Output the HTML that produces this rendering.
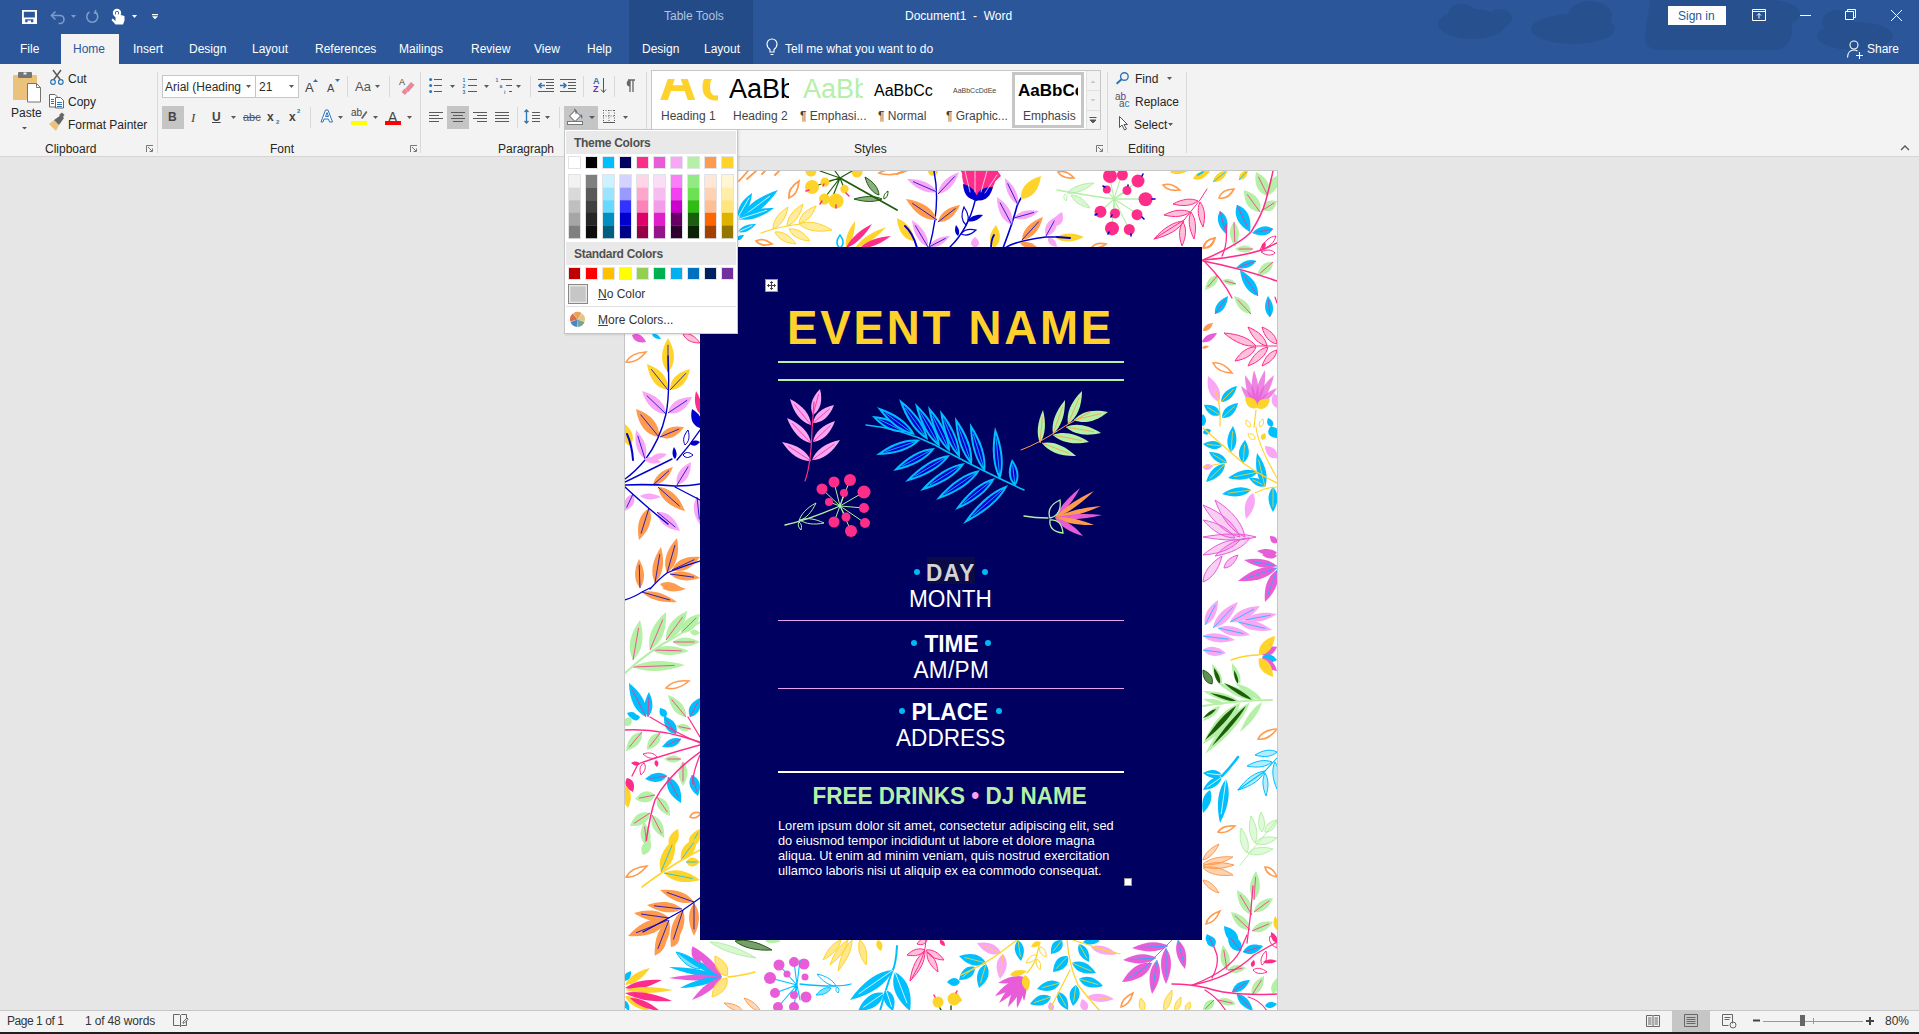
<!DOCTYPE html>
<html><head><meta charset="utf-8">
<style>
*{margin:0;padding:0;box-sizing:border-box}
html,body{width:1919px;height:1034px;overflow:hidden;background:#e6e6e6;font-family:"Liberation Sans",sans-serif}
.a{position:absolute}
.t{position:absolute;white-space:nowrap;line-height:1;font-size:12px}
#title{left:0;top:0;width:1919px;height:64px;background:#2b579a}
#ribbon{left:0;top:64px;width:1919px;height:93px;background:#f3f3f3;border-bottom:1px solid #d5d5d5}
#status{left:0;top:1010px;width:1919px;height:24px;background:#f3f3f3;border-top:1px solid #c6c6c6}
.sep{position:absolute;width:1px;background:#d9d9d9}
.w{color:#fff}
.g{color:#262626}
</style></head><body>
<div id="title" class="a"></div>
<div class="a" style="left:629px;top:0;width:124px;height:64px;background:#234b87"></div>
<div class="a" style="left:61px;top:34px;width:58px;height:30px;background:#f3f3f3"></div>

<svg class="a" style="left:1400px;top:0" width="519" height="64" viewBox="1400 0 519 64">
 <g fill="#27508e">
  <ellipse cx="1472" cy="24" rx="34" ry="15"/>
  <ellipse cx="1462" cy="14" rx="14" ry="10"/>
  <ellipse cx="1500" cy="18" rx="12" ry="9"/>
  <ellipse cx="1573" cy="29" rx="42" ry="15"/>
  <ellipse cx="1590" cy="16" rx="22" ry="15"/>
  <path d="M1650 0h120c12 0 22 10 22 22v10c0 10-8 18-18 18h-115c-10 0-15-6-14-14l5-36z"/>
  <ellipse cx="1770" cy="14" rx="30" ry="14"/>
  <ellipse cx="1855" cy="36" rx="38" ry="14"/>
  <ellipse cx="1838" cy="22" rx="16" ry="12"/>
 </g>
</svg>
<!-- QAT icons -->
<svg class="a" style="left:0;top:0" width="200" height="34" viewBox="0 0 200 34">
 <g fill="none" stroke="#fff" stroke-width="1.6">
  <path d="M22.8 10.8h13.4v12.4h-13.4z"/>
 </g>
 <rect x="25" y="11" width="9" height="5" fill="#fff" opacity="0"/>
 <path d="M22 10h14.5v14h-14.5z M23.6 11.6v6h11.3v-6z M25.2 19.2v3.3h2.3v-2h3.5v2h2.3v-3.3z" fill="#fff" fill-rule="evenodd"/>
 <g fill="none" stroke="#7f9bc8" stroke-width="1.6">
  <path d="M52 15.5h8a4 4 0 0 1 0 8h-1.5"/>
  <path d="M55.5 11.5l-4 4 4 4"/>
  <path d="M89.5 12a5.5 5.5 0 1 0 5.5 0"/>
  <path d="M96 10l-1.5 3 3 .5"/>
 </g>
 <path d="M71 15h5l-2.5 3z" fill="#7f9bc8"/>
 <path d="M132 15h5l-2.5 3z" fill="#fff"/>
 <path d="M152 14h6v1.2h-6z M152 16.2h6l-3 3z" fill="#fff"/>
 <g fill="#fff">
  <circle cx="117" cy="13" r="4.2"/>
  <path d="M115.5 13v8l-3-2.5-1 1.5 4 4.5h7.5l1.5-4v-4.5l-5.5-1.5v-3z"/>
 </g>
 <circle cx="117" cy="13" r="2" fill="#2b579a"/>
 <path d="M116 12v6h2v-6z" fill="#fff"/>
</svg>
<!-- window controls -->
<svg class="a" style="left:1740px;top:0" width="179" height="34" viewBox="1740 0 179 34">
 <g fill="none" stroke="#fff" stroke-width="1">
  <path d="M1752.5 9.5h13v11h-13z M1752.5 11.5h13"/>
  <path d="M1759 18.5v-5 M1757 15.5l2-2 2 2"/>
  <path d="M1800 15.5h11"/>
  <path d="M1845.5 11.5h8v8h-8z M1847.5 11.5v-2h8v8h-2"/>
  <path d="M1891 10l11 11 M1902 10l-11 11"/>
 </g>
</svg>
<!-- share icon -->
<svg class="a" style="left:1845px;top:38px" width="20" height="22" viewBox="1845 38 20 22">
 <g fill="none" stroke="#fff" stroke-width="1.1">
  <circle cx="1854" cy="45" r="4"/>
  <path d="M1847.5 57.5c0-5 3-7.5 6.5-7.5 1.5 0 2.5.3 3.5 1"/>
  <path d="M1859.5 52v7 M1856 55.5h7"/>
 </g>
</svg>
<svg class="a" style="left:765px;top:38px" width="16" height="20" viewBox="765 38 16 20">
 <g fill="none" stroke="#fff" stroke-width="1.1">
  <path d="M770 52v-2.5c-1.8-1.3-3-3.2-3-5.5a5 5 0 0 1 10 0c0 2.3-1.2 4.2-3 5.5v2.5z"/>
  <path d="M770.5 54.5h3"/>
 </g>
</svg>

<!-- tab labels -->
<div class="t w" style="left:20px;top:43px">File</div>
<div class="t" style="left:73px;top:43px;color:#2b579a">Home</div>
<div class="t w" style="left:133px;top:43px">Insert</div>
<div class="t w" style="left:189px;top:43px">Design</div>
<div class="t w" style="left:252px;top:43px">Layout</div>
<div class="t w" style="left:315px;top:43px">References</div>
<div class="t w" style="left:399px;top:43px">Mailings</div>
<div class="t w" style="left:471px;top:43px">Review</div>
<div class="t w" style="left:534px;top:43px">View</div>
<div class="t w" style="left:587px;top:43px">Help</div>
<div class="t w" style="left:642px;top:43px">Design</div>
<div class="t w" style="left:704px;top:43px">Layout</div>
<div class="t w" style="left:785px;top:43px">Tell me what you want to do</div>
<div class="t" style="left:664px;top:10px;color:#b3c3de">Table Tools</div>
<div class="t w" style="left:905px;top:10px">Document1&nbsp;&nbsp;-&nbsp;&nbsp;Word</div>
<div class="a" style="left:1668px;top:6px;width:58px;height:19px;background:#fff"></div>
<div class="t" style="left:1678px;top:10px;color:#2b579a">Sign in</div>
<div class="t w" style="left:1867px;top:43px">Share</div>

<div id="ribbon" class="a"></div>
<!-- ribbon separators -->
<div class="sep" style="left:157px;top:72px;height:81px"></div>
<div class="sep" style="left:420px;top:72px;height:81px"></div>
<div class="sep" style="left:646px;top:72px;height:81px"></div>
<div class="sep" style="left:1107px;top:72px;height:81px"></div>
<div class="sep" style="left:1186px;top:72px;height:81px"></div>
<div class="sep" style="left:347px;top:76px;height:21px"></div>
<div class="sep" style="left:389px;top:76px;height:21px"></div>
<div class="sep" style="left:310px;top:107px;height:21px"></div>
<div class="sep" style="left:530px;top:76px;height:21px"></div>
<div class="sep" style="left:583px;top:76px;height:21px"></div>
<div class="sep" style="left:614px;top:76px;height:21px"></div>
<div class="sep" style="left:517px;top:107px;height:21px"></div>
<div class="sep" style="left:559px;top:107px;height:21px"></div>
<!-- group labels -->
<div class="t g" style="left:45px;top:143px">Clipboard</div>
<div class="t g" style="left:270px;top:143px">Font</div>
<div class="t g" style="left:498px;top:143px">Paragraph</div>
<div class="t g" style="left:854px;top:143px">Styles</div>
<div class="t g" style="left:1128px;top:143px">Editing</div>
<!-- clipboard -->
<div class="t g" style="left:11px;top:107px">Paste</div>
<div class="t g" style="left:68px;top:73px">Cut</div>
<div class="t g" style="left:68px;top:96px">Copy</div>
<div class="t g" style="left:68px;top:119px">Format Painter</div>
<!-- font boxes -->
<div class="a" style="left:162px;top:75px;width:137px;height:23px;background:#fff;border:1px solid #c6c6c6"></div>
<div class="a" style="left:255px;top:75px;width:1px;height:23px;background:#c6c6c6"></div>
<div class="t" style="left:165px;top:81px;color:#2b2b2b">Arial (Heading</div>
<div class="t" style="left:259px;top:81px;color:#2b2b2b">21</div>
<div class="a" style="left:162px;top:106px;width:22px;height:23px;background:#c5c5c5"></div>
<div class="a" style="left:447px;top:106px;width:22px;height:23px;background:#c5c5c5"></div>
<div class="a" style="left:564px;top:106px;width:34px;height:24px;background:#c5c5c5"></div>
<div class="t" style="left:168px;top:111px;font-weight:bold;font-size:12px;color:#444">B</div>
<div class="t" style="left:191px;top:111px;font-style:italic;font-size:13px;color:#444;font-family:'Liberation Serif',serif">I</div>
<div class="t" style="left:212px;top:111px;font-weight:bold;font-size:12px;color:#444;text-decoration:underline">U</div>
<div class="t" style="left:243px;top:112px;font-size:11px;color:#555;text-decoration:line-through">abc</div>
<div class="t" style="left:267px;top:111px;font-weight:bold;font-size:12px;color:#444">x</div>
<div class="t" style="left:276px;top:119px;font-weight:bold;font-size:6px;color:#2e75b6">2</div>
<div class="t" style="left:289px;top:111px;font-weight:bold;font-size:12px;color:#444">x</div>
<div class="t" style="left:297px;top:108px;font-weight:bold;font-size:6px;color:#2e75b6">2</div>
<div class="t" style="left:305px;top:81px;font-size:13px;color:#444">A</div>
<div class="t" style="left:327px;top:83px;font-size:11px;color:#444">A</div>
<div class="t" style="left:355px;top:80px;font-size:13px;color:#555">Aa</div>
<div class="t" style="left:388px;top:110px;font-size:14px;color:#444">A</div>
<div class="t" style="left:351px;top:108px;font-size:10px;color:#444">ab</div>
<div class="t" style="left:399px;top:78px;font-size:9px;color:#444">A</div>
<div class="t" style="left:593px;top:77px;font-size:9px;font-weight:bold;color:#2e75b6">A</div>
<div class="t" style="left:593px;top:85px;font-size:9px;font-weight:bold;color:#7030a0">Z</div>
<svg class="a" style="left:0;top:64px" width="1919" height="96" viewBox="0 64 1919 96">
 <!-- paste -->
 <rect x="13" y="75" width="24" height="25" rx="1" fill="#eac27b"/>
 <rect x="18" y="72" width="14" height="6" rx="1" fill="#757575"/>
 <rect x="23.5" y="72.5" width="3" height="2" fill="#f3f3f3"/>
 <path d="M27.5 83.5h9l4 4v14.5h-13z" fill="#fff" stroke="#757575"/>
 <path d="M36.5 83.5v4h4" fill="none" stroke="#757575"/>
 <path d="M22 127h5l-2.5 2.5z" fill="#555"/>
 <!-- cut -->
 <path d="M53 70l7.5 10 M61 70l-7.5 10" stroke="#5a5a5a" stroke-width="1.5"/>
 <circle cx="53" cy="82" r="2.3" fill="none" stroke="#2e75b6" stroke-width="1.2"/>
 <circle cx="60.8" cy="82" r="2.3" fill="none" stroke="#2e75b6" stroke-width="1.2"/>
 <!-- copy -->
 <path d="M49.5 94.5h5.5l2 2v10.5h-7.5z" fill="#fff" stroke="#666"/>
 <path d="M55.5 97.5h5l3 3v7.5h-8z" fill="#fff" stroke="#666"/>
 <path d="M51 99.5h3 M51 101.5h3 M51 103.5h3 M57 102.5h5 M57 104.5h5 M57 106.5h5" stroke="#2e75b6"/>
 <!-- format painter -->
 <path d="M49 124l5-4 5 5-3 6z" fill="#eac27b"/>
 <path d="M54 120l7-5 3 3-5 7z" fill="#666"/>
 <path d="M59 115l3-2.5 2.5 2.5-2.5 3z" fill="#666"/>
 <!-- dialog launchers -->
 <g fill="none" stroke="#777" stroke-width="1">
  <path d="M146.5 152v-6.5h6.5 M148 147l4 4 M149.5 151.5h3v-3"/>
  <path d="M410.5 152v-6.5h6.5 M412 147l4 4 M413.5 151.5h3v-3"/>
  <path d="M1096.5 152v-6.5h6.5 M1098 147l4 4 M1099.5 151.5h3v-3"/>
 </g>
 <!-- dropdown arrows -->
 <g fill="#595959">
  <path d="M246 85h5l-2.5 3z"/><path d="M289 85h5l-2.5 3z"/>
  <path d="M375 85h5l-2.5 3z"/><path d="M231 116h5l-2.5 3z"/>
  <path d="M338 116h5l-2.5 3z"/><path d="M373 116h5l-2.5 3z"/><path d="M407 116h5l-2.5 3z"/>
  <path d="M450 85h5l-2.5 3z"/><path d="M484 85h5l-2.5 3z"/><path d="M516 85h5l-2.5 3z"/>
  <path d="M545 116h5l-2.5 3z"/><path d="M589 116h6l-3 3z"/><path d="M623 116h5l-2.5 3z"/>
  <path d="M1167 77h5l-2.5 3z"/><path d="M1168 123h5l-2.5 3z"/>
 </g>
 <!-- grow/shrink triangles -->
 <path d="M313 82h5l-2.5-3z" fill="#2e75b6"/>
 <path d="M335 79h5l-2.5 3z" fill="#2e75b6"/>
 <!-- eraser -->
 <path d="M405 89l6-7 3.5 3-6 7z" fill="#e8899a"/>
 <path d="M401.5 92l3-3.5 3.5 3-3 3.5z" fill="#e8899a"/>
 <!-- text effects A -->
 <path d="M321 122l4.5-12h2.5l4.5 12h-3l-1-3h-4.5l-1 3z M325.5 116.5h3l-1.5-4z" fill="#fff" stroke="#2e75b6" stroke-width="1" fill-rule="evenodd"/>
 <!-- highlighter -->
 <path d="M361 118l5-7 1.5 1-5 7z" fill="#666"/>
 <rect x="351" y="121" width="16" height="4" fill="#ffff00"/>
 <rect x="385" y="121" width="16" height="4" fill="#ff0000"/>
 <!-- bullets -->
 <g fill="#2e75b6"><circle cx="430.6" cy="79.4" r="1.5"/><circle cx="430.6" cy="85.5" r="1.5"/><circle cx="430.6" cy="91.4" r="1.5"/></g>
 <g stroke="#5a5a5a" stroke-width="1">
  <path d="M434 79.5h8 M434 85.5h8 M434 91.5h8"/>
  <path d="M468 79.5h9 M468 85.5h9 M468 91.5h9"/>
  <path d="M501 79.5h11 M506 85.5h6 M509 91.5h3"/>
  <path d="M538 79.5h16 M546 82.5h8 M546 85.5h8 M546 88.5h8 M538 91.5h16"/>
  <path d="M560 79.5h16 M568 82.5h8 M568 85.5h8 M568 88.5h8 M560 91.5h16"/>
  <path d="M429 112.5h14 M429 115.5h10 M429 118.5h14 M429 121.5h10"/>
  <path d="M451 112.5h14 M453 115.5h10 M451 118.5h14 M453 121.5h10"/>
  <path d="M473 112.5h14 M477 115.5h10 M473 118.5h14 M477 121.5h10"/>
  <path d="M495 112.5h14 M495 115.5h14 M495 118.5h14 M495 121.5h14"/>
  <path d="M532 112.5h8 M532 115.5h8 M532 118.5h8 M532 121.5h8"/>
  <path d="M603 122.5h12"/>
  <path d="M603.5 110v11 M609 110v11 M614.5 110v11 M603 110.5h12 M603 116h12" stroke-dasharray="1 1.5"/>
 </g>
 <g fill="#2e75b6" font-family="Liberation Sans" font-size="5" font-weight="bold">
  <text x="462.5" y="81.5">1</text><text x="462.5" y="87.5">2</text><text x="462.5" y="93.5">3</text>
  <text x="495.5" y="81.5">1</text><text x="499.5" y="87.5">a</text><text x="504" y="93.5">i</text>
 </g>
 <path d="M545 85.5h-6 M541.5 83l-2.5 2.5 2.5 2.5" stroke="#2e75b6" stroke-width="1.6" fill="none"/>
 <path d="M560 85.5h6 M563.5 83l2.5 2.5-2.5 2.5" stroke="#2e75b6" stroke-width="1.6" fill="none"/>
 <path d="M603.5 78v14 M601 89.5l2.5 3 2.5-3" stroke="#555" stroke-width="1" fill="none"/>
 <!-- pilcrow -->
 <path d="M628 80h7 M630 80v12 M633 80v12" stroke="#666" stroke-width="1.3"/>
 <path d="M630 80a3.2 3.2 0 0 0 0 6.4z" fill="#666"/>
 <!-- line spacing arrows -->
 <path d="M526.5 110v13 M524.5 112l2-2 2 2 M524.5 121l2 2 2-2" stroke="#2e75b6" stroke-width="1.3" fill="none"/>
 <!-- shading bucket -->
 <path d="M569.5 116l5.5-5.5 5.5 5.5-5.5 5.5z" fill="#fff" stroke="#555"/>
 <path d="M574 109.5a1.5 1.5 0 0 1 2 1.5v3" stroke="#555" fill="none"/>
 <path d="M580.5 114a3 3 0 0 1 1 5l-.5-3z" fill="#2e75b6"/>
 <rect x="567.5" y="121.5" width="15" height="3" fill="#fff" stroke="#777"/>
 <!-- find -->
 <circle cx="1124.4" cy="76.5" r="3.8" fill="none" stroke="#2e75b6" stroke-width="1.4"/>
 <path d="M1121.6 79.3l-5 4.5" stroke="#2e75b6" stroke-width="2"/>
 <!-- select cursor -->
 <path d="M1119.5 116.5v11l2.5-2.5 2.5 5 2-1-2.5-4.5h3.5z" fill="#fff" stroke="#555"/>
 <!-- collapse caret -->
 <path d="M1901 150l4-4 4 4" stroke="#555" stroke-width="1.3" fill="none"/>
</svg>
<div class="t" style="left:1115px;top:92px;font-size:10px;color:#555">a<span style="color:#7030a0">b</span></div>
<div class="t" style="left:1119px;top:99px;font-size:10px;color:#555">a<span style="color:#2e75b6">c</span></div>
<div class="t g" style="left:1135px;top:73px">Find</div>
<div class="t g" style="left:1135px;top:96px">Replace</div>
<div class="t g" style="left:1134px;top:119px">Select</div>
<!-- styles gallery -->
<div class="a" style="left:651px;top:70px;width:450px;height:60px;background:#fff;border:1px solid #c6c6c6"></div>
<div class="a" style="left:1086px;top:71px;width:14px;height:58px;background:#f3f3f3;border-left:1px solid #e1e1e1"></div>
<div class="a" style="left:1086px;top:90px;width:14px;height:1px;background:#e1e1e1"></div>
<div class="a" style="left:1086px;top:110px;width:14px;height:1px;background:#e1e1e1"></div>
<svg class="a" style="left:1086px;top:71px" width="14" height="58" viewBox="1086 71 14 58">
 <path d="M1090.5 83l2.5-2.5 2.5 2.5z" fill="#c6c6c6"/>
 <path d="M1090.5 99l2.5 2.5 2.5-2.5z" fill="#c6c6c6"/>
 <path d="M1089.5 117.5h7 M1090 120h6l-3 3z" stroke="#555" fill="#555" stroke-width="1"/>
</svg>
<div class="a" style="left:1012px;top:72px;width:72px;height:56px;border:3px solid #c6c6c6"></div>
<div class="t" style="left:661px;top:110px;color:#444">Heading 1</div>
<div class="t" style="left:733px;top:110px;color:#444">Heading 2</div>
<div class="t" style="left:800px;top:110px;color:#444">¶ Emphasi...</div>
<div class="t" style="left:878px;top:110px;color:#444">¶ Normal</div>
<div class="t" style="left:946px;top:110px;color:#444">¶ Graphic...</div>
<div class="t" style="left:1023px;top:110px;color:#444">Emphasis</div>
<div class="a" style="left:655px;top:79px;width:63px;height:27px;overflow:hidden"><div class="t" style="left:4px;top:-23px;font-size:52px;font-weight:bold;color:#ffd12b;letter-spacing:4px">Ac</div></div>
<div class="a" style="left:726px;top:72px;width:63px;height:34px;overflow:hidden"><div class="t" style="left:3px;top:4px;font-size:27px;color:#000">AaBbC</div></div>
<div class="a" style="left:800px;top:72px;width:63px;height:34px;overflow:hidden"><div class="t" style="left:3px;top:4px;font-size:27px;color:#b4f0a6">AaBbC</div></div>
<div class="t" style="left:874px;top:83px;font-size:16px;color:#000">AaBbCc</div>
<div class="t" style="left:953px;top:87px;font-size:7px;color:#444">AaBbCcDdEe</div>
<div class="a" style="left:1015px;top:75px;width:63px;height:30px;overflow:hidden"><div class="t" style="left:3px;top:7px;font-size:17px;font-weight:bold;color:#000">AaBbCc</div></div>

<div id="status" class="a"></div>
<div class="a" style="left:0;top:1032px;width:1919px;height:2px;background:#1f1f1f"></div>

<!-- page -->
<div class="a" style="left:624px;top:170px;width:654px;height:840px;background:#fff;border:1px solid #c6c6c6;border-bottom:none"></div>
<div class="a" style="left:700px;top:247px;width:502px;height:693px;background:#000060"></div>

<!--FLORAL--><svg class="a" style="left:625px;top:171px" width="652" height="839" viewBox="625 171 652 839">
<defs><clipPath id="pg"><path fill-rule="evenodd" d="M625 171h652v839h-652z M700 247v693h502v-693z"/></clipPath><clipPath id="nv"><rect x="700" y="247" width="502" height="693"/></clipPath></defs>
<g clip-path="url(#pg)">
<!-- /workdir/fl/01_top1.txt -->
<path d="M739 181L748 171 M747 179L756 171 M762 174L766 170 M775 175L779 171" fill="none" stroke="#ff9b4f" stroke-width="1.8" stroke-linecap="round"/>
<circle cx="811.0" cy="171.0" r="5.5" fill="#ffd42a"/>
<circle cx="857.0" cy="172.0" r="5.5" fill="#ffd42a"/>
<path d="M840 178L812 187 M840 178L825 182 M840 178L826 196 M840 178L833 196 M840 178L844 188 M840 178L820 171 M840 178L835 171 M840 178L852 171" fill="none" stroke="#1e5e0b" stroke-width="1.2" stroke-linecap="round"/>
<path d="M840 178L897 210" fill="none" stroke="#1e5e0b" stroke-width="1.8" stroke-linecap="round"/>
<circle cx="812.0" cy="187.0" r="7.0" fill="#ffd42a"/>
<circle cx="825.0" cy="182.0" r="4.5" fill="#ffd42a"/>
<circle cx="824.5" cy="199.0" r="5.5" fill="#ffd42a"/>
<circle cx="836.0" cy="201.0" r="7.5" fill="#ffd42a"/>
<circle cx="844.5" cy="189.0" r="4.2" fill="#ffd42a"/>
<path d="M806 191L809 190 M823 186L824 184 M820 204L822 201 M836 208L836 205 M846 193L849 196" fill="none" stroke="#ff2d8a" stroke-width="1.5" stroke-linecap="round"/>
<path d="M879.0 195.0C878.6 188.1 873.7 181.8 865.0 177.0C867.5 186.6 872.4 192.9 879.0 195.0z" fill="#1e5e0b" fill-opacity="0.5" stroke="#1e5e0b" stroke-width="1"/>
<path d="M882.0 199.0C875.0 195.7 865.2 195.7 854.0 199.0C865.2 202.3 875.0 202.3 882.0 199.0z" fill="#1e5e0b" fill-opacity="0.5" stroke="#1e5e0b" stroke-width="1"/>
<path d="M884.0 199.0C886.8 197.9 888.2 195.1 888.0 191.0C884.6 193.3 883.2 196.1 884.0 199.0z" fill="none" stroke="#1e5e0b" stroke-width="1"/>
<path d="M789.0 198.0C794.9 195.8 798.4 189.8 799.0 181.0C791.6 185.8 788.1 191.7 789.0 198.0z" fill="none" stroke="#ff9b4f" stroke-width="1.8"/>
<path d="M756.0 241.0C759.4 245.0 765.0 246.1 772.0 244.0C766.2 239.5 760.6 238.5 756.0 241.0z" fill="none" stroke="#ff9b4f" stroke-width="1.8"/>
<path d="M738.0 220.0C752.0 217.8 766.0 207.3 778.0 190.0C758.0 196.7 744.0 207.2 738.0 220.0z" fill="#00bfff"/>
<path d="M738.0 220.0L770.0 196.0" stroke="#ffffff" stroke-width="0.8"/>
<path d="M738.0 217.0C746.1 213.7 751.0 205.3 752.0 193.0C741.8 199.9 736.9 208.3 738.0 217.0z" fill="#00bfff"/>
<path d="M738.0 217.0L749.2 197.8" stroke="#ffffff" stroke-width="0.8"/>
<path d="M739.0 219.0C749.3 221.3 761.6 217.5 774.0 208.0C758.4 207.3 746.2 211.2 739.0 219.0z" fill="#00bfff"/>
<path d="M739.0 219.0L767.0 210.2" stroke="#ffffff" stroke-width="0.8"/>
<path d="M738.0 232.0C744.1 233.6 750.4 230.8 756.0 224.0C747.2 223.6 740.9 226.4 738.0 232.0z" fill="#00bfff"/>
<path d="M738.0 232.0L752.4 225.6" stroke="#ffffff" stroke-width="0.8"/>
<path d="M736.0 240.0C739.4 241.0 742.2 239.3 744.0 235.0C739.4 234.7 736.6 236.5 736.0 240.0z" fill="#00bfff"/>
<path d="M761 233L773 229L787 226L800 224" fill="none" stroke="#ffd42a" stroke-width="1.2" stroke-linecap="round"/>
<path d="M773.0 229.0C780.6 226.1 785.8 218.4 788.0 207.0C778.2 213.2 772.9 220.9 773.0 229.0z" fill="#ffd42a" fill-opacity="0.45" stroke="#ffd42a" stroke-width="1"/>
<path d="M787.0 226.0C794.8 223.2 800.4 215.5 803.0 204.0C792.8 210.1 787.2 217.8 787.0 226.0z" fill="#ffd42a" fill-opacity="0.45" stroke="#ffd42a" stroke-width="1"/>
<path d="M799.0 223.0C806.5 222.0 812.5 216.1 816.0 206.0C805.9 209.5 800.0 215.5 799.0 223.0z" fill="#ffd42a" fill-opacity="0.45" stroke="#ffd42a" stroke-width="1"/>
<path d="M799.0 224.0C806.3 230.7 817.8 232.8 832.0 230.0C819.8 222.4 808.2 220.3 799.0 224.0z" fill="#ffd42a" fill-opacity="0.45" stroke="#ffd42a" stroke-width="1"/>
<path d="M775.0 232.0C777.9 239.0 785.3 243.2 796.0 244.0C789.9 235.2 782.6 231.0 775.0 232.0z" fill="#ffd42a" fill-opacity="0.45" stroke="#ffd42a" stroke-width="1"/>
<path d="M789.0 229.0C791.9 236.0 799.3 240.2 810.0 241.0C803.9 232.2 796.6 228.0 789.0 229.0z" fill="#ffd42a" fill-opacity="0.45" stroke="#ffd42a" stroke-width="1"/>
<path d="M840.0 248.0C844.0 244.8 844.0 240.2 840.0 235.0C836.0 240.2 836.0 244.8 840.0 248.0z" fill="none" stroke="#00bfff" stroke-width="1.5"/>
<path d="M846.0 248.0C852.0 242.5 855.2 233.1 855.0 221.0C847.6 230.5 844.5 240.0 846.0 248.0z" fill="#ffd42a"/>
<path d="M846.0 248.0C855.2 244.9 864.3 236.5 872.0 224.0C858.9 230.7 849.8 239.1 846.0 248.0z" fill="#ff2d8a"/>
<path d="M855.0 248.0C865.0 246.1 875.8 238.7 886.0 227.0C871.4 232.1 860.5 239.4 855.0 248.0z" fill="#ffd42a"/>
<path d="M860.0 248.0C869.2 248.7 880.0 244.5 891.0 236.0C877.2 237.1 866.3 241.3 860.0 248.0z" fill="#ff2d8a"/>
<!-- /workdir/fl/02_top2.txt -->
<circle cx="933.0" cy="171.0" r="5.0" fill="#ffd42a"/>
<path d="M934 171Q941 205 929 248" fill="none" stroke="#0000cc" stroke-width="1.4" stroke-linecap="round"/>
<path d="M937.0 192.0C931.9 183.3 921.4 178.7 907.0 179.0C916.6 189.7 927.1 194.2 937.0 192.0z" fill="#f9a6f7"/>
<path d="M937.0 192.0L913.0 181.6" stroke="#0000cc" stroke-width="0.8"/>
<path d="M938.0 194.0C947.6 192.6 954.9 184.9 959.0 172.0C946.3 176.7 938.9 184.4 938.0 194.0z" fill="#f9a6f7"/>
<path d="M938.0 194.0L954.8 176.4" stroke="#0000cc" stroke-width="0.8"/>
<path d="M937.0 220.0C933.4 208.7 922.5 201.3 906.0 199.0C914.3 213.5 925.1 220.8 937.0 220.0z" fill="#ff9b4f"/>
<path d="M937.0 220.0L912.2 203.2" stroke="#0000cc" stroke-width="0.8"/>
<path d="M938.0 222.0C947.2 222.5 954.9 216.5 960.0 205.0C947.5 207.1 939.8 213.0 938.0 222.0z" fill="#ff9b4f"/>
<path d="M938.0 222.0L955.6 208.4" stroke="#0000cc" stroke-width="0.8"/>
<path d="M928.0 247.0C929.1 237.2 923.5 227.7 912.0 220.0C913.3 233.9 918.9 243.3 928.0 247.0z" fill="#f9a6f7"/>
<path d="M928.0 247.0L915.2 225.4" stroke="#0000cc" stroke-width="0.8"/>
<path d="M929.0 247.0C936.4 248.4 943.8 244.5 950.0 236.0C939.4 236.3 932.1 240.1 929.0 247.0z" fill="#f9a6f7"/>
<path d="M929.0 247.0L945.8 238.2" stroke="#0000cc" stroke-width="0.8"/>
<path d="M913.0 241.0C914.5 231.5 908.9 223.4 897.0 218.0C897.9 231.0 903.5 239.0 913.0 241.0z" fill="#ffd42a"/>
<path d="M905 226Q913 233 917 248" fill="none" stroke="#0000cc" stroke-width="2" stroke-linecap="round"/>
<path d="M978 197L960 170L997 170L1001 176z" fill="#ff2d8a"/>
<path d="M978.0 197.0C980.8 186.3 975.2 177.2 962.0 171.0C961.6 185.6 967.2 194.7 978.0 197.0z" fill="#ff2d8a"/>
<path d="M978.0 197.0C989.1 195.6 995.8 186.8 997.0 172.0C983.0 177.2 976.4 185.9 978.0 197.0z" fill="#ff2d8a"/>
<path d="M976.0 200.0C977.4 192.2 972.8 186.6 963.0 184.0C963.6 194.2 968.1 199.8 976.0 200.0z" fill="#0000cc"/>
<path d="M976.0 200.0C984.3 202.0 990.2 197.5 993.0 187.0C982.2 186.9 976.2 191.5 976.0 200.0z" fill="#0000cc"/>
<circle cx="976.0" cy="198.0" r="3.0" fill="#0000cc"/>
<path d="M975 201Q968 230 949 248" fill="none" stroke="#0000cc" stroke-width="1.4" stroke-linecap="round"/>
<path d="M966.0 225.0C969.5 220.1 968.8 213.8 964.0 207.0C960.8 214.6 961.5 220.9 966.0 225.0z" fill="none" stroke="#0000cc" stroke-width="1.2"/>
<path d="M968.0 221.0C973.0 222.6 978.2 220.5 983.0 215.0C975.8 214.3 970.5 216.4 968.0 221.0z" fill="#0000cc"/>
<path d="M958.0 236.0C960.1 232.8 959.4 228.9 956.0 225.0C954.2 229.9 954.9 233.7 958.0 236.0z" fill="#0000cc"/>
<path d="M961.0 234.0C965.6 236.2 970.9 234.8 976.0 230.0C969.1 228.4 963.9 229.8 961.0 234.0z" fill="none" stroke="#0000cc" stroke-width="1.2"/>
<path d="M975.0 248.0C980.3 245.2 980.3 241.4 975.0 237.0C969.7 241.4 969.7 245.2 975.0 248.0z" fill="#f9a6f7"/>
<path d="M994.0 248.0C1001.1 242.8 1001.8 234.8 996.0 225.0C988.6 233.6 987.9 241.7 994.0 248.0z" fill="#ffd42a"/>
<path d="M991 248Q991 240 994 235" fill="none" stroke="#0000cc" stroke-width="1.8" stroke-linecap="round"/>
<path d="M1003 248Q1013 222 1017 206Q1021 195 1031 189" fill="none" stroke="#0000cc" stroke-width="1.6" stroke-linecap="round"/>
<path d="M1021.0 199.0C1032.0 198.5 1039.0 190.4 1041.0 176.0C1027.0 180.0 1020.0 188.0 1021.0 199.0z" fill="#ffd42a"/>
<path d="M1018.0 205.0C1019.5 195.9 1015.0 186.5 1005.0 178.0C1005.4 191.1 1010.0 200.6 1018.0 205.0z" fill="#f9a6f7"/>
<path d="M1018.0 205.0L1007.6 183.4" stroke="#0000cc" stroke-width="0.8"/>
<path d="M1012.0 225.0C1014.1 214.9 1008.9 205.1 997.0 197.0C997.1 211.3 1002.4 221.1 1012.0 225.0z" fill="#f9a6f7"/>
<path d="M1012.0 225.0L1000.0 202.6" stroke="#0000cc" stroke-width="0.8"/>
<path d="M1014.0 218.0C1021.7 221.4 1030.4 218.9 1039.0 211.0C1027.6 208.7 1018.8 211.1 1014.0 218.0z" fill="#f9a6f7"/>
<path d="M1014.0 218.0L1034.0 212.4" stroke="#0000cc" stroke-width="0.8"/>
<path d="M1022.0 240.0C1032.2 238.7 1039.5 230.7 1043.0 217.0C1029.7 221.7 1022.3 229.8 1022.0 240.0z" fill="#ff9b4f"/>
<path d="M1022.0 240.0L1038.8 221.6" stroke="#0000cc" stroke-width="0.8"/>
<path d="M1020.0 243.0C1023.4 248.1 1029.7 249.8 1038.0 248.0C1031.9 242.2 1025.6 240.4 1020.0 243.0z" fill="#ff9b4f"/>
<path d="M1046.0 236.0C1054.6 234.2 1058.4 227.2 1057.0 216.0C1046.8 220.8 1042.9 227.8 1046.0 236.0z" fill="#f9a6f7"/>
<path d="M1046.0 236.0L1054.8 220.0" stroke="#0000cc" stroke-width="0.8"/>
<path d="M1048.0 238.0C1047.4 243.1 1050.6 246.2 1057.0 247.0C1056.2 240.6 1053.1 237.4 1048.0 238.0z" fill="#f9a6f7"/>
<path d="M1005 248Q1015 241 1046 237L1058 237" fill="none" stroke="#0000cc" stroke-width="1.5" stroke-linecap="round"/>
<path d="M897 174L904 171" fill="none" stroke="#ff9b4f" stroke-width="2" stroke-linecap="round"/>
<path d="M879.0 173.0C886.0 175.8 895.4 175.1 906.0 171.0C895.0 168.5 885.5 169.2 879.0 173.0z" fill="none" stroke="#ff9b4f" stroke-width="1.6"/>
<path d="M970 192L965 171 M975 192L975 171 M981 192L987 171 M985 193L997 175" fill="none" stroke="#ffffff" stroke-width="0.7" stroke-linecap="round"/>
<!-- /workdir/fl/03_top3.txt -->
<path d="M1058.0 172.0C1060.8 176.6 1066.4 178.7 1074.0 178.0C1068.8 172.5 1063.2 170.4 1058.0 172.0z" fill="none" stroke="#ff9b4f" stroke-width="1.6"/>
<path d="M1057 190Q1090 196 1114 199L1146 199" fill="none" stroke="#b4f0a6" stroke-width="1.6" stroke-linecap="round"/>
<path d="M1114 199L1110 178 M1114 199L1121 177 M1114 199L1107 191 M1114 199L1127 191 M1114 199L1134 184 M1114 199L1101 211 M1114 199L1115 212 M1114 199L1136 213 M1114 199L1112 226 M1114 199L1128 227" fill="none" stroke="#b4f0a6" stroke-width="1.1" stroke-linecap="round"/>
<circle cx="1110.0" cy="176.0" r="7.0" fill="#ff2d8a"/>
<circle cx="1122.4" cy="175.0" r="5.5" fill="#ff2d8a"/>
<circle cx="1138.0" cy="181.0" r="6.5" fill="#ff2d8a"/>
<circle cx="1106.8" cy="189.5" r="4.0" fill="#ff2d8a"/>
<circle cx="1127.0" cy="190.5" r="4.5" fill="#ff2d8a"/>
<circle cx="1145.6" cy="199.3" r="7.0" fill="#ff2d8a"/>
<circle cx="1100.5" cy="211.8" r="6.0" fill="#ff2d8a"/>
<circle cx="1115.0" cy="213.4" r="5.0" fill="#ff2d8a"/>
<circle cx="1137.0" cy="214.7" r="5.5" fill="#ff2d8a"/>
<circle cx="1112.0" cy="228.4" r="7.0" fill="#ff2d8a"/>
<circle cx="1129.3" cy="229.5" r="5.5" fill="#ff2d8a"/>
<path d="M1142 176L1143 174 M1103 186L1105 187 M1128 186L1128 185 M1152 199L1155 199 M1095 215L1097 214 M1111 217L1112 215 M1142 217L1144 219 M1108 234L1109 232 M1131 234L1131 236" fill="none" stroke="#0000cc" stroke-width="1.6" stroke-linecap="round"/>
<path d="M1067.0 193.0C1075.1 194.2 1084.6 190.7 1094.0 183.0C1081.8 183.3 1072.4 186.8 1067.0 193.0z" fill="#b4f0a6" fill-opacity="0.5" stroke="#b4f0a6" stroke-width="1"/>
<path d="M1071.0 195.0C1073.5 201.5 1080.1 206.1 1090.0 208.0C1084.7 199.5 1078.0 195.0 1071.0 195.0z" fill="#b4f0a6" fill-opacity="0.5" stroke="#b4f0a6" stroke-width="1"/>
<path d="M1065.0 194.0C1063.3 196.0 1063.6 198.5 1066.0 201.0C1067.6 197.9 1067.2 195.5 1065.0 194.0z" fill="none" stroke="#b4f0a6" stroke-width="1"/>
<path d="M1056.0 226.0C1062.4 224.6 1064.5 219.7 1062.0 212.0C1054.7 215.5 1052.6 220.4 1056.0 226.0z" fill="#f9a6f7"/>
<path d="M1056.0 238.0C1063.2 243.1 1073.0 242.7 1084.0 237.0C1072.6 232.1 1062.8 232.4 1056.0 238.0z" fill="#ffd42a"/>
<path d="M1057 237L1070 238" fill="none" stroke="#0000cc" stroke-width="2" stroke-linecap="round"/>
<path d="M1092.0 247.0C1096.1 248.9 1101.0 247.8 1106.0 244.0C1099.8 242.6 1094.9 243.6 1092.0 247.0z" fill="none" stroke="#ff9b4f" stroke-width="1.6"/>
<path d="M1170.0 172.0C1174.7 175.1 1181.0 174.7 1188.0 171.0C1180.6 168.1 1174.3 168.4 1170.0 172.0z" fill="#ffd42a"/>
<path d="M1193.0 179.0C1199.2 181.2 1205.2 178.4 1210.0 171.0C1201.2 170.0 1195.3 172.8 1193.0 179.0z" fill="#ffd42a"/>
<path d="M1198 175L1203 172" fill="none" stroke="#00bfff" stroke-width="1.5" stroke-linecap="round"/>
<path d="M1213.0 182.0C1219.7 182.6 1224.9 178.4 1228.0 170.0C1219.1 171.2 1213.8 175.4 1213.0 182.0z" fill="#ffd42a"/>
<path d="M1213.0 182.0L1225.0 172.4" stroke="#00bfff" stroke-width="0.8"/>
<path d="M1239.0 180.0C1244.2 180.2 1247.4 176.7 1248.0 170.0C1241.4 171.3 1238.3 174.8 1239.0 180.0z" fill="#ffd42a"/>
<path d="M1239.0 180.0L1246.2 172.0" stroke="#00bfff" stroke-width="0.8"/>
<path d="M1163.0 185.0C1166.3 189.4 1172.3 191.2 1180.0 190.0C1174.1 184.8 1168.2 183.1 1163.0 185.0z" fill="none" stroke="#ff9b4f" stroke-width="1.6"/>
<path d="M1154 239L1184 220L1200 200L1207 189" fill="none" stroke="#ff2d8a" stroke-width="1" stroke-linecap="round"/>
<path d="M1198.0 201.0C1191.3 197.8 1182.5 198.8 1173.0 204.0C1183.5 206.8 1192.2 205.7 1198.0 201.0z" fill="#ff2d8a" fill-opacity="0.3" stroke="#ff2d8a" stroke-width="1"/>
<path d="M1190.0 212.0C1183.0 208.8 1173.9 209.8 1164.0 215.0C1174.9 217.8 1184.0 216.7 1190.0 212.0z" fill="#ff2d8a" fill-opacity="0.3" stroke="#ff2d8a" stroke-width="1"/>
<path d="M1184.0 221.0C1174.1 221.5 1163.6 227.8 1154.0 239.0C1168.4 235.8 1178.9 229.5 1184.0 221.0z" fill="#ff2d8a" fill-opacity="0.3" stroke="#ff2d8a" stroke-width="1"/>
<path d="M1200.0 202.0C1196.8 208.7 1197.8 217.5 1203.0 227.0C1205.8 216.5 1204.7 207.8 1200.0 202.0z" fill="#ff2d8a" fill-opacity="0.3" stroke="#ff2d8a" stroke-width="1"/>
<path d="M1191.0 212.0C1187.8 219.2 1188.8 228.6 1194.0 239.0C1196.8 227.8 1195.7 218.3 1191.0 212.0z" fill="#ff2d8a" fill-opacity="0.3" stroke="#ff2d8a" stroke-width="1"/>
<path d="M1183.0 222.0C1178.8 227.8 1178.4 236.2 1182.0 246.0C1186.4 236.6 1186.7 228.2 1183.0 222.0z" fill="#ff2d8a" fill-opacity="0.3" stroke="#ff2d8a" stroke-width="1"/>
<path d="M1203.0 248.0C1208.1 248.1 1212.3 244.6 1215.0 238.0C1208.1 239.4 1203.9 242.9 1203.0 248.0z" fill="none" stroke="#ff9b4f" stroke-width="1.6"/>
<!-- /workdir/fl/04_right1.txt -->
<path d="M1268.0 196.0C1272.1 186.4 1267.9 178.0 1256.0 172.0C1253.7 185.2 1257.9 193.6 1268.0 196.0z" fill="#b4f0a6"/>
<path d="M1268.0 196.0L1258.4 176.8" stroke="#ff2d8a" stroke-width="0.8"/>
<path d="M1277.0 176.0C1269.5 178.4 1266.7 185.1 1269.0 195.0C1277.7 189.7 1280.5 183.1 1277.0 176.0z" fill="#b4f0a6"/>
<path d="M1260.0 212.0C1262.5 201.8 1256.9 194.1 1244.0 190.0C1243.9 203.5 1249.5 211.2 1260.0 212.0z" fill="#b4f0a6"/>
<path d="M1260.0 212.0L1247.2 194.4" stroke="#ff2d8a" stroke-width="0.8"/>
<path d="M1263.0 210.0C1270.1 213.3 1275.0 210.2 1277.0 201.0C1267.8 199.0 1262.9 202.2 1263.0 210.0z" fill="#b4f0a6"/>
<path d="M1263.0 210.0L1274.2 202.8" stroke="#ff2d8a" stroke-width="0.8"/>
<path d="M1234.0 222.0C1228.3 228.5 1228.6 237.2 1235.0 247.0C1240.6 236.8 1240.2 228.0 1234.0 222.0z" fill="#b4f0a6"/>
<path d="M1234.0 222.0L1234.8 242.0" stroke="#ff2d8a" stroke-width="0.8"/>
<path d="M1253.0 249.0C1248.5 244.3 1242.2 244.3 1235.0 249.0C1242.2 253.7 1248.5 253.7 1253.0 249.0z" fill="#b4f0a6"/>
<path d="M1253.0 249.0L1238.6 249.0" stroke="#ff2d8a" stroke-width="0.8"/>
<path d="M1273.0 262.0C1265.1 261.0 1259.5 265.9 1257.0 276.0C1267.3 274.9 1272.9 270.0 1273.0 262.0z" fill="#b4f0a6"/>
<path d="M1273.0 262.0L1260.2 273.2" stroke="#ff2d8a" stroke-width="0.8"/>
<path d="M1218.0 275.0C1210.7 275.3 1206.2 280.5 1205.0 290.0C1214.2 287.5 1218.8 282.2 1218.0 275.0z" fill="#b4f0a6"/>
<path d="M1218.0 275.0L1207.6 287.0" stroke="#ff2d8a" stroke-width="0.8"/>
<path d="M1236.0 284.0C1233.6 279.2 1228.7 277.8 1222.0 280.0C1226.5 285.4 1231.4 286.8 1236.0 284.0z" fill="#b4f0a6"/>
<path d="M1236.0 284.0L1224.8 280.8" stroke="#ff2d8a" stroke-width="0.8"/>
<path d="M1237.0 205.0C1233.1 215.2 1237.6 224.7 1250.0 232.0C1252.0 217.7 1247.4 208.3 1237.0 205.0z" fill="#00bfff"/>
<path d="M1237.0 205.0L1247.4 226.6" stroke="#ff2d8a" stroke-width="0.8"/>
<path d="M1273.0 229.0C1266.6 224.1 1259.3 225.5 1252.0 233.0C1261.5 237.3 1268.9 235.9 1273.0 229.0z" fill="#00bfff"/>
<path d="M1273.0 229.0L1256.2 232.2" stroke="#ff2d8a" stroke-width="0.8"/>
<path d="M1220.0 211.0C1215.7 218.3 1217.8 226.3 1226.0 234.0C1229.4 223.3 1227.3 215.2 1220.0 211.0z" fill="#00bfff"/>
<path d="M1220.0 211.0L1224.8 229.4" stroke="#ff2d8a" stroke-width="0.8"/>
<path d="M1256.0 261.0C1249.5 258.4 1242.5 260.8 1236.0 268.0C1245.5 269.6 1252.5 267.1 1256.0 261.0z" fill="#00bfff"/>
<path d="M1256.0 261.0L1240.0 266.6" stroke="#ff2d8a" stroke-width="0.8"/>
<path d="M1258.0 296.0C1259.0 285.7 1252.7 276.6 1240.0 270.0C1241.7 284.2 1248.0 293.3 1258.0 296.0z" fill="#00bfff"/>
<path d="M1258.0 296.0L1243.6 275.2" stroke="#ff2d8a" stroke-width="0.8"/>
<path d="M1215.0 314.0C1222.6 312.6 1227.1 306.3 1228.0 296.0C1218.5 300.1 1213.9 306.4 1215.0 314.0z" fill="#00bfff"/>
<path d="M1215.0 314.0L1225.4 299.6" stroke="#ff2d8a" stroke-width="0.8"/>
<path d="M1203 260Q1240 244 1251 232Q1262 215 1266 200Q1270 185 1273 171" fill="none" stroke="#ff2d8a" stroke-width="1.5" stroke-linecap="round"/>
<path d="M1203 260Q1235 258 1262 250L1277 243" fill="none" stroke="#ff2d8a" stroke-width="1.5" stroke-linecap="round"/>
<path d="M1203 261Q1240 268 1277 281" fill="none" stroke="#ff2d8a" stroke-width="1.5" stroke-linecap="round"/>
<path d="M1205 262Q1223 280 1232 298" fill="none" stroke="#ff2d8a" stroke-width="1.3" stroke-linecap="round"/>
<path d="M1226 224Q1228 245 1222 256" fill="none" stroke="#ff2d8a" stroke-width="1.3" stroke-linecap="round"/>
<path d="M1276.0 236.0C1269.4 236.5 1263.8 241.4 1260.0 250.0C1269.0 247.4 1274.6 242.5 1276.0 236.0z" fill="none" stroke="#ff2d8a" stroke-width="1"/>
<path d="M1275.0 253.0C1271.7 249.4 1266.8 249.1 1261.0 252.0C1266.4 255.7 1271.3 256.1 1275.0 253.0z" fill="none" stroke="#ff2d8a" stroke-width="1"/>
<path d="M1265.0 242.0C1261.8 243.1 1260.7 245.9 1262.0 250.0C1265.7 247.7 1266.7 244.9 1265.0 242.0z" fill="#ff2d8a"/>
<path d="M1219.0 198.0C1224.8 199.2 1230.1 196.0 1234.0 189.0C1225.9 189.2 1220.7 192.3 1219.0 198.0z" fill="none" stroke="#ff9b4f" stroke-width="1.6"/>
<path d="M1204.0 248.0C1209.4 248.5 1213.3 245.0 1215.0 238.0C1207.9 239.0 1204.1 242.5 1204.0 248.0z" fill="none" stroke="#ff9b4f" stroke-width="1.6"/>
<!-- /workdir/fl/05_right2.txt -->
<path d="M1251.0 314.0C1251.1 305.4 1245.2 299.1 1234.0 296.0C1236.4 307.3 1242.4 313.6 1251.0 314.0z" fill="#b4f0a6"/>
<path d="M1251.0 314.0L1237.4 299.6" stroke="#ff2d8a" stroke-width="0.8"/>
<path d="M1270.0 317.0C1274.8 311.2 1274.1 303.9 1268.0 296.0C1263.5 304.9 1264.2 312.3 1270.0 317.0z" fill="#00bfff"/>
<path d="M1270.0 317.0L1268.4 300.2" stroke="#ff2d8a" stroke-width="0.8"/>
<path d="M1275 297L1277 303" fill="none" stroke="#ff2d8a" stroke-width="1.2" stroke-linecap="round"/>
<path d="M1203.0 331.0C1207.6 331.6 1211.1 328.8 1213.0 323.0C1206.9 323.6 1203.4 326.4 1203.0 331.0z" fill="#ff9b4f"/>
<path d="M1202.0 342.0C1207.8 343.2 1213.1 340.0 1217.0 333.0C1208.9 333.2 1203.7 336.3 1202.0 342.0z" fill="#e85cd8"/>
<path d="M1202.0 348.0C1204.3 349.4 1206.7 348.7 1209.0 346.0C1205.7 344.9 1203.2 345.6 1202.0 348.0z" fill="#ff9b4f"/>
<path d="M1256 346L1277 346" fill="none" stroke="#ff2d8a" stroke-width="1.2" stroke-linecap="round"/>
<path d="M1256.0 346.0C1249.8 338.4 1238.6 333.9 1224.0 333.0C1235.0 342.5 1246.2 347.1 1256.0 346.0z" fill="#ff2d8a" fill-opacity="0.3" stroke="#ff2d8a" stroke-width="1"/>
<path d="M1267.0 346.0C1265.5 338.0 1258.9 331.3 1248.0 327.0C1252.3 337.9 1259.0 344.5 1267.0 346.0z" fill="#ff2d8a" fill-opacity="0.3" stroke="#ff2d8a" stroke-width="1"/>
<path d="M1277.0 344.0C1276.7 336.7 1271.5 330.7 1262.0 327.0C1264.5 336.9 1269.8 342.8 1277.0 344.0z" fill="#ff2d8a" fill-opacity="0.3" stroke="#ff2d8a" stroke-width="1"/>
<path d="M1256.0 347.0C1248.2 346.6 1240.8 351.5 1235.0 361.0C1246.0 359.3 1253.3 354.4 1256.0 347.0z" fill="#ff2d8a" fill-opacity="0.3" stroke="#ff2d8a" stroke-width="1"/>
<path d="M1268.0 347.0C1259.8 348.4 1252.8 355.0 1248.0 366.0C1259.2 361.8 1266.2 355.1 1268.0 347.0z" fill="#ff2d8a" fill-opacity="0.3" stroke="#ff2d8a" stroke-width="1"/>
<path d="M1277.0 350.0C1270.3 351.3 1265.1 356.9 1262.0 366.0C1270.9 362.3 1276.2 356.7 1277.0 350.0z" fill="#ff2d8a" fill-opacity="0.3" stroke="#ff2d8a" stroke-width="1"/>
<path d="M1213.0 363.0C1215.9 369.0 1222.5 372.5 1232.0 373.0C1226.3 365.5 1219.6 362.0 1213.0 363.0z" fill="none" stroke="#ff9b4f" stroke-width="1.6"/>
<path d="M1219.0 402.0C1222.4 392.9 1218.5 383.8 1208.0 376.0C1206.3 389.0 1210.1 398.1 1219.0 402.0z" fill="#f9a6f7"/>
<path d="M1215 390Q1221 402 1220 426" fill="none" stroke="#ffd42a" stroke-width="1.2" stroke-linecap="round"/>
<path d="M1221.0 402.0C1228.8 401.8 1234.4 396.2 1237.0 386.0C1226.8 388.6 1221.2 394.2 1221.0 402.0z" fill="#00bfff"/>
<path d="M1221.0 402.0L1233.8 389.2" stroke="#ffd42a" stroke-width="0.8"/>
<path d="M1220.0 415.0C1219.2 407.4 1213.6 403.9 1204.0 405.0C1207.2 414.1 1212.8 417.6 1220.0 415.0z" fill="#00bfff"/>
<path d="M1220.0 415.0L1207.2 407.0" stroke="#ffd42a" stroke-width="0.8"/>
<path d="M1222.0 418.0C1230.1 418.6 1235.7 413.4 1238.0 403.0C1227.5 404.6 1221.9 409.9 1222.0 418.0z" fill="#00bfff"/>
<path d="M1222.0 418.0L1234.8 406.0" stroke="#ffd42a" stroke-width="0.8"/>
<path d="M1203.0 426.0C1207.0 423.0 1207.0 418.8 1203.0 414.0C1199.0 418.8 1199.0 423.0 1203.0 426.0z" fill="#00bfff"/>
<path d="M1256.0 406.0C1255.4 398.6 1250.2 391.6 1241.0 386.0C1243.8 396.4 1249.1 403.4 1256.0 406.0z" fill="#e85cd8" opacity="0.75"/>
<path d="M1256.0 406.0C1257.6 396.7 1253.8 385.8 1245.0 375.0C1245.0 389.0 1248.9 399.8 1256.0 406.0z" fill="#e85cd8" opacity="0.75"/>
<path d="M1256.0 406.0C1260.1 396.7 1259.4 384.1 1254.0 370.0C1250.2 384.7 1250.9 397.3 1256.0 406.0z" fill="#e85cd8" opacity="0.75"/>
<path d="M1256.0 406.0C1262.8 398.1 1265.9 385.5 1265.0 370.0C1256.9 383.3 1253.7 395.9 1256.0 406.0z" fill="#e85cd8" opacity="0.75"/>
<path d="M1256.0 406.0C1264.5 400.6 1270.8 389.7 1274.0 375.0C1262.8 385.1 1256.5 395.9 1256.0 406.0z" fill="#e85cd8" opacity="0.75"/>
<path d="M1256.0 406.0C1263.8 404.5 1271.2 398.2 1277.0 388.0C1266.0 392.2 1258.7 398.5 1256.0 406.0z" fill="#e85cd8" opacity="0.75"/>
<path d="M1257.0 408.0C1258.0 400.8 1253.8 397.0 1245.0 397.0C1245.8 405.8 1250.0 409.7 1257.0 408.0z" fill="#ffd42a"/>
<path d="M1257.0 408.0C1263.7 410.7 1268.2 407.5 1270.0 399.0C1261.4 397.7 1256.8 400.8 1257.0 408.0z" fill="#ffd42a"/>
<path d="M1256 410L1254 427" fill="none" stroke="#ffd42a" stroke-width="1.2" stroke-linecap="round"/>
<path d="M1250.0 427.0C1251.3 423.9 1249.9 421.5 1246.0 420.0C1245.3 424.1 1246.7 426.6 1250.0 427.0z" fill="none" stroke="#ffd42a" stroke-width="1"/>
<path d="M1260.0 427.0C1263.2 425.9 1264.3 423.1 1263.0 419.0C1259.3 421.3 1258.3 424.1 1260.0 427.0z" fill="none" stroke="#ffd42a" stroke-width="1"/>
<path d="M1277.0 408.0C1281.5 403.2 1280.4 398.0 1274.0 393.0C1270.0 400.0 1271.0 405.3 1277.0 408.0z" fill="#f9a6f7"/>
<path d="M1272.0 427.0C1274.6 423.1 1273.2 420.0 1268.0 418.0C1266.0 423.2 1267.4 426.4 1272.0 427.0z" fill="#00bfff"/>
<!-- /workdir/fl/06_right3.txt -->
<path d="M1231.0 452.0C1237.5 446.0 1238.2 436.9 1233.0 426.0C1226.2 435.9 1225.5 445.0 1231.0 452.0z" fill="#00bfff"/>
<path d="M1231.0 452.0L1232.6 431.2" stroke="#ffd42a" stroke-width="0.8"/>
<path d="M1243.0 463.0C1250.1 457.8 1250.8 449.8 1245.0 440.0C1237.6 448.6 1236.9 456.7 1243.0 463.0z" fill="#00bfff"/>
<path d="M1243.0 463.0L1244.6 444.6" stroke="#ffd42a" stroke-width="0.8"/>
<path d="M1222.0 446.0C1217.8 440.2 1211.2 439.5 1203.0 444.0C1210.0 450.1 1216.7 450.8 1222.0 446.0z" fill="#00bfff"/>
<path d="M1222.0 446.0L1206.8 444.4" stroke="#ffd42a" stroke-width="0.8"/>
<path d="M1227.0 463.0C1225.3 455.7 1219.0 451.9 1209.0 452.0C1213.4 460.9 1219.7 464.8 1227.0 463.0z" fill="#00bfff"/>
<path d="M1227.0 463.0L1212.6 454.2" stroke="#ffd42a" stroke-width="0.8"/>
<path d="M1225.0 464.0C1216.1 464.2 1209.5 470.5 1206.0 482.0C1217.7 479.1 1224.4 472.8 1225.0 464.0z" fill="#00bfff"/>
<path d="M1225.0 464.0L1209.8 478.4" stroke="#ffd42a" stroke-width="0.8"/>
<path d="M1258.0 472.0C1249.3 467.6 1238.8 469.7 1228.0 478.0C1241.2 481.5 1251.7 479.4 1258.0 472.0z" fill="#00bfff"/>
<path d="M1258.0 472.0L1234.0 476.8" stroke="#ffd42a" stroke-width="0.8"/>
<path d="M1266.0 486.0C1263.7 479.8 1257.8 477.0 1249.0 478.0C1253.8 485.4 1259.8 488.2 1266.0 486.0z" fill="#00bfff"/>
<path d="M1266.0 486.0L1252.4 479.6" stroke="#ffd42a" stroke-width="0.8"/>
<path d="M1251.0 490.0C1242.9 485.1 1232.8 486.5 1222.0 494.0C1234.4 498.3 1244.6 496.9 1251.0 490.0z" fill="#00bfff"/>
<path d="M1251.0 490.0L1227.8 493.2" stroke="#ffd42a" stroke-width="0.8"/>
<path d="M1265.0 487.0C1268.8 477.1 1266.0 465.2 1257.0 453.0C1254.4 468.0 1257.2 479.9 1265.0 487.0z" fill="#00bfff"/>
<path d="M1265.0 487.0L1258.6 459.8" stroke="#ffd42a" stroke-width="0.8"/>
<path d="M1273.0 487.0C1267.0 493.2 1267.0 502.0 1273.0 512.0C1279.0 502.0 1279.0 493.2 1273.0 487.0z" fill="#00bfff"/>
<path d="M1273.0 487.0L1273.0 507.0" stroke="#ffd42a" stroke-width="0.8"/>
<path d="M1203.0 433.0C1206.4 436.0 1209.2 434.9 1211.0 430.0C1206.4 427.5 1203.6 428.5 1203.0 433.0z" fill="#00bfff"/>
<path d="M1270.0 427.0C1266.1 433.3 1268.6 437.2 1277.0 438.0C1279.8 430.0 1277.4 426.2 1270.0 427.0z" fill="#00bfff"/>
<path d="M1203.0 468.0C1206.3 471.4 1209.8 470.7 1213.0 466.0C1208.2 462.9 1204.7 463.6 1203.0 468.0z" fill="#f9a6f7"/>
<path d="M1253.0 493.0C1245.5 497.9 1243.0 507.0 1246.0 519.0C1254.6 510.2 1257.0 501.1 1253.0 493.0z" fill="#f9a6f7"/>
<path d="M1277.0 458.0C1278.2 450.8 1274.0 446.6 1265.0 446.0C1265.6 455.0 1269.8 459.2 1277.0 458.0z" fill="#f9a6f7"/>
<path d="M1203 428Q1222 445 1243 463Q1262 476 1277 483" fill="none" stroke="#ffd42a" stroke-width="1.3" stroke-linecap="round"/>
<path d="M1203 467L1224 463" fill="none" stroke="#ffd42a" stroke-width="1.1" stroke-linecap="round"/>
<path d="M1255 493Q1266 487 1277 487" fill="none" stroke="#ffd42a" stroke-width="1.1" stroke-linecap="round"/>
<path d="M1256 427Q1258 445 1277 478" fill="none" stroke="#ffd42a" stroke-width="1.1" stroke-linecap="round"/>
<path d="M1255.0 439.0C1255.2 435.0 1252.7 433.3 1248.0 434.0C1248.9 438.7 1251.3 440.5 1255.0 439.0z" fill="none" stroke="#ffd42a" stroke-width="1"/>
<path d="M1262.0 440.0C1265.8 439.6 1266.9 437.1 1265.0 433.0C1260.7 434.5 1259.7 436.9 1262.0 440.0z" fill="#ffd42a"/>
<path d="M1245.0 537.0C1242.7 523.6 1232.2 510.6 1215.0 500.0C1221.8 519.0 1232.3 531.9 1245.0 537.0z" fill="#e85cd8" fill-opacity="0.3" stroke="#e85cd8" stroke-width="1"/>
<path d="M1240.0 537.0C1235.1 524.0 1222.2 512.8 1203.0 505.0C1213.4 522.8 1226.4 534.0 1240.0 537.0z" fill="#e85cd8" fill-opacity="0.3" stroke="#e85cd8" stroke-width="1"/>
<path d="M1235.0 538.0C1229.6 528.9 1218.4 522.6 1203.0 520.0C1213.2 531.8 1224.4 538.1 1235.0 538.0z" fill="#e85cd8" fill-opacity="0.3" stroke="#e85cd8" stroke-width="1"/>
<path d="M1256.0 537.0C1242.8 533.0 1224.2 533.0 1203.0 537.0C1224.2 541.0 1242.8 541.0 1256.0 537.0z" fill="#e85cd8" fill-opacity="0.3" stroke="#e85cd8" stroke-width="1"/>
<path d="M1240.0 540.0C1228.8 538.8 1215.8 544.1 1203.0 555.0C1219.8 553.9 1232.7 548.7 1240.0 540.0z" fill="#e85cd8" fill-opacity="0.3" stroke="#e85cd8" stroke-width="1"/>
<path d="M1250.0 538.0C1238.8 537.8 1226.6 544.1 1215.0 556.0C1231.4 553.5 1243.7 547.2 1250.0 538.0z" fill="#e85cd8" fill-opacity="0.3" stroke="#e85cd8" stroke-width="1"/>
<path d="M1277.0 543.0C1278.1 538.4 1275.6 536.0 1270.0 536.0C1270.0 541.6 1272.4 544.1 1277.0 543.0z" fill="#e85cd8"/>
<path d="M1277.0 553.0C1272.4 548.5 1265.4 547.8 1257.0 551.0C1264.6 555.8 1271.6 556.5 1277.0 553.0z" fill="#e85cd8"/>
<!-- /workdir/fl/07_right4.txt -->
<path d="M1203.0 582.0C1212.0 578.6 1218.7 569.5 1222.0 556.0C1210.1 563.3 1203.5 572.4 1203.0 582.0z" fill="#e85cd8" fill-opacity="0.3" stroke="#e85cd8" stroke-width="1"/>
<path d="M1224.0 568.0C1230.2 567.7 1235.1 563.1 1238.0 555.0C1229.7 557.3 1224.8 561.8 1224.0 568.0z" fill="#e85cd8" fill-opacity="0.4" stroke="#e85cd8" stroke-width="1"/>
<path d="M1277.0 566.0C1269.7 559.3 1258.2 557.2 1244.0 560.0C1256.2 567.6 1267.8 569.7 1277.0 566.0z" fill="#e85cd8"/>
<path d="M1277.0 566.0L1250.6 561.2" stroke="#00bfff" stroke-width="0.8"/>
<path d="M1277.0 568.0C1265.1 564.9 1251.5 569.5 1238.0 581.0C1255.7 582.1 1269.4 577.6 1277.0 568.0z" fill="#e85cd8"/>
<path d="M1277.0 568.0L1245.8 578.4" stroke="#00bfff" stroke-width="0.8"/>
<path d="M1277.0 570.0C1267.8 575.7 1263.6 586.9 1265.0 602.0C1276.0 591.5 1280.2 580.3 1277.0 570.0z" fill="#e85cd8"/>
<path d="M1277.0 570.0L1267.4 595.6" stroke="#00bfff" stroke-width="0.8"/>
<path d="M1277.0 556.0C1273.5 551.8 1268.3 551.4 1262.0 555.0C1267.7 559.4 1273.0 559.7 1277.0 556.0z" fill="#e85cd8"/>
<path d="M1205.0 625.0C1213.6 621.5 1218.1 612.8 1218.0 600.0C1207.5 607.2 1202.9 616.0 1205.0 625.0z" fill="#f9a6f7"/>
<path d="M1205.0 625.0L1215.4 605.0" stroke="#00bfff" stroke-width="0.8"/>
<path d="M1213.0 628.0C1224.0 626.1 1232.8 617.0 1238.0 602.0C1223.2 607.8 1214.5 616.9 1213.0 628.0z" fill="#f9a6f7"/>
<path d="M1213.0 628.0L1233.0 607.2" stroke="#00bfff" stroke-width="0.8"/>
<path d="M1230.0 622.0C1240.6 623.9 1251.1 618.3 1260.0 606.0C1244.9 606.5 1234.4 612.1 1230.0 622.0z" fill="#f9a6f7"/>
<path d="M1230.0 622.0L1254.0 609.2" stroke="#00bfff" stroke-width="0.8"/>
<path d="M1245.0 620.0C1254.0 623.7 1265.2 621.6 1277.0 614.0C1263.2 611.2 1252.0 613.3 1245.0 620.0z" fill="#f9a6f7"/>
<path d="M1245.0 620.0L1270.6 615.2" stroke="#00bfff" stroke-width="0.8"/>
<path d="M1238.0 622.0C1245.1 629.8 1257.0 632.6 1272.0 630.0C1259.8 621.0 1247.9 618.2 1238.0 622.0z" fill="#f9a6f7"/>
<path d="M1238.0 622.0L1265.2 628.4" stroke="#00bfff" stroke-width="0.8"/>
<path d="M1218.0 628.0C1224.7 635.6 1235.9 638.0 1250.0 635.0C1238.5 626.4 1227.3 623.9 1218.0 628.0z" fill="#f9a6f7"/>
<path d="M1218.0 628.0L1243.6 633.6" stroke="#00bfff" stroke-width="0.8"/>
<path d="M1203.0 636.0C1210.3 642.9 1221.5 644.3 1235.0 640.0C1222.9 632.5 1211.7 631.1 1203.0 636.0z" fill="#f9a6f7"/>
<path d="M1203.0 636.0L1228.6 639.2" stroke="#00bfff" stroke-width="0.8"/>
<path d="M1203.0 650.0C1208.0 656.7 1216.0 657.7 1226.0 653.0C1217.6 645.9 1209.5 644.8 1203.0 650.0z" fill="#f9a6f7"/>
<path d="M1203.0 650.0L1221.4 652.4" stroke="#00bfff" stroke-width="0.8"/>
<path d="M1262.0 655.0C1268.3 657.7 1273.5 654.9 1277.0 647.0C1268.5 645.5 1263.2 648.3 1262.0 655.0z" fill="#e85cd8"/>
<path d="M1262.0 657.0C1264.7 663.0 1270.0 664.0 1277.0 660.0C1272.0 653.6 1266.8 652.5 1262.0 657.0z" fill="#00bfff"/>
<path d="M1262.0 658.0C1262.3 665.3 1267.5 669.8 1277.0 671.0C1274.5 661.8 1269.2 657.2 1262.0 658.0z" fill="#e85cd8"/>
<path d="M1259.0 655.0C1268.1 654.5 1273.7 647.9 1275.0 636.0C1263.5 639.3 1257.9 646.0 1259.0 655.0z" fill="#ffd42a"/>
<path d="M1259.0 658.0C1257.1 666.7 1262.0 673.3 1273.0 677.0C1272.8 665.5 1267.9 658.8 1259.0 658.0z" fill="#ffd42a"/>
<path d="M1231 660Q1245 655 1259 655" fill="none" stroke="#ffd42a" stroke-width="1.4" stroke-linecap="round"/>
<path d="M1212.0 684.0C1213.7 678.0 1210.5 673.1 1203.0 670.0C1202.7 678.1 1205.8 683.0 1212.0 684.0z" fill="#1e5e0b" fill-opacity="0.7" stroke="#1e5e0b" stroke-width="1"/>
<path d="M1222.0 684.0C1223.1 677.2 1219.6 670.2 1212.0 664.0C1212.4 673.8 1215.9 680.8 1222.0 684.0z" fill="#b4f0a6"/>
<path d="M1220.0 684.0C1221.0 679.1 1218.9 673.5 1214.0 668.0C1213.9 675.3 1216.0 680.9 1220.0 684.0z" fill="#1e5e0b"/>
<path d="M1240.0 684.0C1241.7 677.3 1238.9 670.0 1232.0 663.0C1231.5 672.8 1234.3 680.2 1240.0 684.0z" fill="#b4f0a6"/>
<path d="M1238.0 684.0C1238.9 680.0 1237.5 675.1 1234.0 670.0C1233.7 676.1 1235.1 681.0 1238.0 684.0z" fill="#1e5e0b"/>
<!-- /workdir/fl/08_right5.txt -->
<path d="M1262.0 700.0C1257.4 692.4 1247.9 686.4 1235.0 683.0C1243.7 693.2 1253.1 699.1 1262.0 700.0z" fill="#b4f0a6"/>
<path d="M1255.0 700.0C1248.0 690.9 1235.0 685.0 1218.0 683.0C1230.6 694.6 1243.5 700.6 1255.0 700.0z" fill="#b4f0a6"/>
<path d="M1252.0 700.0C1246.4 693.5 1236.6 687.5 1224.0 683.0C1233.8 692.1 1243.6 698.0 1252.0 700.0z" fill="#1e5e0b"/>
<path d="M1240.0 702.0C1232.1 694.8 1219.1 690.9 1203.0 691.0C1216.5 699.9 1229.4 703.7 1240.0 702.0z" fill="#b4f0a6"/>
<path d="M1238.0 702.0C1231.6 697.9 1221.8 694.7 1210.0 693.0C1220.6 698.5 1230.4 701.6 1238.0 702.0z" fill="#1e5e0b"/>
<path d="M1225.0 704.0C1220.2 699.5 1212.5 697.8 1203.0 699.0C1211.1 704.2 1218.8 706.0 1225.0 704.0z" fill="#b4f0a6"/>
<path d="M1240.0 703.0C1224.8 707.9 1211.9 722.3 1203.0 744.0C1223.7 732.9 1236.7 718.6 1240.0 703.0z" fill="#b4f0a6"/>
<path d="M1236.0 706.0C1225.8 712.3 1214.9 724.2 1205.0 740.0C1219.9 728.6 1230.7 716.7 1236.0 706.0z" fill="#1e5e0b"/>
<path d="M1250.0 702.0C1233.7 710.6 1218.0 728.8 1205.0 754.0C1228.0 737.6 1243.8 719.4 1250.0 702.0z" fill="#b4f0a6"/>
<path d="M1246.0 706.0C1235.5 714.3 1223.6 728.3 1212.0 746.0C1227.6 731.7 1239.5 717.7 1246.0 706.0z" fill="#1e5e0b"/>
<path d="M1262.0 702.0C1253.3 707.1 1245.6 717.6 1240.0 732.0C1252.0 722.4 1259.7 711.9 1262.0 702.0z" fill="#b4f0a6"/>
<path d="M1220.0 706.0C1213.1 706.8 1207.2 712.0 1203.0 721.0C1212.4 718.0 1218.4 712.7 1220.0 706.0z" fill="#b4f0a6"/>
<path d="M1216.0 709.0C1211.6 709.6 1207.1 712.8 1203.0 718.0C1209.3 716.0 1213.9 712.9 1216.0 709.0z" fill="#1e5e0b"/>
<path d="M1203 706Q1240 700 1272 700" fill="none" stroke="#b4f0a6" stroke-width="1.8" stroke-linecap="round"/>
<path d="M1258.0 739.0C1264.6 740.0 1271.3 736.5 1277.0 729.0C1267.5 729.5 1260.9 733.0 1258.0 739.0z" fill="none" stroke="#ff9b4f" stroke-width="1.6"/>
<path d="M1277 758L1265 771L1238 790" fill="none" stroke="#00bfff" stroke-width="1.1" stroke-linecap="round"/>
<path d="M1277.0 752.0C1271.0 748.8 1263.3 749.8 1255.0 755.0C1264.3 757.8 1272.0 756.7 1277.0 752.0z" fill="#00bfff" fill-opacity="0.3" stroke="#00bfff" stroke-width="1"/>
<path d="M1272.0 762.0C1265.1 759.1 1256.4 760.5 1247.0 766.0C1257.6 768.3 1266.4 766.9 1272.0 762.0z" fill="#00bfff" fill-opacity="0.3" stroke="#00bfff" stroke-width="1"/>
<path d="M1265.0 771.0C1255.6 771.9 1246.1 778.6 1238.0 790.0C1251.5 786.2 1260.9 779.6 1265.0 771.0z" fill="#00bfff" fill-opacity="0.3" stroke="#00bfff" stroke-width="1"/>
<path d="M1265.0 773.0C1261.9 778.9 1262.3 786.9 1266.0 796.0C1268.9 786.7 1268.6 778.6 1265.0 773.0z" fill="#00bfff" fill-opacity="0.3" stroke="#00bfff" stroke-width="1"/>
<path d="M1275.0 762.0C1271.5 769.0 1272.2 778.5 1277.0 789.0C1280.2 777.9 1279.5 768.5 1275.0 762.0z" fill="#00bfff" fill-opacity="0.3" stroke="#00bfff" stroke-width="1"/>
<path d="M1222.0 775.0C1217.8 769.2 1211.2 768.5 1203.0 773.0C1210.0 779.1 1216.7 779.8 1222.0 775.0z" fill="#00bfff"/>
<path d="M1222.0 775.0L1206.8 773.4" stroke="#ffffff" stroke-width="0.8"/>
<path d="M1222.0 777.0C1214.2 775.9 1207.6 780.4 1203.0 790.0C1213.6 789.2 1220.3 784.6 1222.0 777.0z" fill="#00bfff"/>
<path d="M1222.0 777.0L1206.8 787.4" stroke="#ffffff" stroke-width="0.8"/>
<path d="M1226.0 779.0C1217.9 789.1 1215.8 804.5 1220.0 823.0C1229.0 806.3 1231.1 790.9 1226.0 779.0z" fill="#00bfff"/>
<path d="M1226.0 779.0L1221.2 814.2" stroke="#ffffff" stroke-width="0.8"/>
<path d="M1210.0 790.0C1203.2 794.2 1200.7 802.3 1203.0 813.0C1210.9 805.3 1213.3 797.3 1210.0 790.0z" fill="#00bfff"/>
<path d="M1238 757Q1230 768 1222 776" fill="none" stroke="#00bfff" stroke-width="2.5" stroke-linecap="round"/>
<!-- /workdir/fl/09_right6.txt -->
<path d="M1218.0 832.0C1223.4 833.6 1229.3 831.5 1235.0 826.0C1227.1 825.3 1221.1 827.4 1218.0 832.0z" fill="none" stroke="#ff9b4f" stroke-width="1.6"/>
<path d="M1203.0 860.0C1209.4 858.4 1215.0 852.8 1219.0 844.0C1210.2 848.0 1204.6 853.6 1203.0 860.0z" fill="#ff9b4f" fill-opacity="0.45" stroke="#ff9b4f" stroke-width="1"/>
<path d="M1203.0 864.0C1211.4 866.1 1221.9 863.7 1233.0 857.0C1220.1 855.9 1209.6 858.4 1203.0 864.0z" fill="#ff9b4f" fill-opacity="0.45" stroke="#ff9b4f" stroke-width="1"/>
<path d="M1203.0 866.0C1210.9 869.7 1221.7 869.4 1234.0 865.0C1221.5 861.4 1210.6 861.8 1203.0 866.0z" fill="#ff9b4f" fill-opacity="0.45" stroke="#ff9b4f" stroke-width="1"/>
<path d="M1203.0 868.0C1209.4 874.3 1219.9 876.7 1233.0 875.0C1222.1 867.7 1211.6 865.2 1203.0 868.0z" fill="#ff9b4f" fill-opacity="0.45" stroke="#ff9b4f" stroke-width="1"/>
<path d="M1203.0 880.0C1204.9 885.8 1210.5 890.4 1219.0 893.0C1214.7 885.2 1209.1 880.7 1203.0 880.0z" fill="#ff9b4f" fill-opacity="0.45" stroke="#ff9b4f" stroke-width="1"/>
<path d="M1240 865L1277 820" fill="none" stroke="#b4f0a6" stroke-width="1" stroke-linecap="round"/>
<path d="M1247.0 853.0C1250.0 845.7 1247.9 836.9 1241.0 828.0C1238.9 839.1 1241.0 847.8 1247.0 853.0z" fill="#b4f0a6" fill-opacity="0.4" stroke="#b4f0a6" stroke-width="1"/>
<path d="M1255.0 843.0C1258.6 835.6 1257.2 826.1 1251.0 816.0C1248.0 827.5 1249.4 836.9 1255.0 843.0z" fill="#b4f0a6" fill-opacity="0.4" stroke="#b4f0a6" stroke-width="1"/>
<path d="M1262.0 832.0C1265.7 826.8 1265.4 819.8 1261.0 812.0C1257.4 820.2 1257.8 827.2 1262.0 832.0z" fill="#b4f0a6" fill-opacity="0.4" stroke="#b4f0a6" stroke-width="1"/>
<path d="M1265.0 832.0C1271.3 832.3 1275.5 828.1 1277.0 820.0C1268.9 821.5 1264.7 825.7 1265.0 832.0z" fill="#b4f0a6" fill-opacity="0.4" stroke="#b4f0a6" stroke-width="1"/>
<path d="M1255.0 843.0C1261.5 846.3 1269.2 844.5 1277.0 838.0C1267.2 835.5 1259.5 837.2 1255.0 843.0z" fill="#b4f0a6" fill-opacity="0.4" stroke="#b4f0a6" stroke-width="1"/>
<path d="M1248.0 853.0C1255.0 856.6 1263.7 855.2 1273.0 849.0C1262.3 846.0 1253.5 847.4 1248.0 853.0z" fill="#b4f0a6" fill-opacity="0.4" stroke="#b4f0a6" stroke-width="1"/>
<path d="M1265.0 867.0C1265.9 872.1 1270.1 875.6 1277.0 877.0C1274.3 870.4 1270.1 866.9 1265.0 867.0z" fill="none" stroke="#ff9b4f" stroke-width="1.6"/>
<path d="M1254.0 900.0C1261.1 893.2 1261.8 883.1 1256.0 871.0C1248.6 882.1 1247.9 892.3 1254.0 900.0z" fill="#b4f0a6"/>
<path d="M1254.0 900.0L1255.6 876.8" stroke="#ff2d8a" stroke-width="0.8"/>
<path d="M1252.0 915.0C1254.0 905.3 1248.7 896.6 1237.0 890.0C1237.3 903.4 1242.5 912.2 1252.0 915.0z" fill="#b4f0a6"/>
<path d="M1252.0 915.0L1240.0 895.0" stroke="#ff2d8a" stroke-width="0.8"/>
<path d="M1254.0 912.0C1262.3 913.3 1269.0 908.4 1273.0 898.0C1261.8 898.8 1255.2 903.7 1254.0 912.0z" fill="#b4f0a6"/>
<path d="M1254.0 912.0L1269.2 900.8" stroke="#ff2d8a" stroke-width="0.8"/>
<path d="M1250.0 930.0C1249.8 920.7 1243.2 914.4 1231.0 912.0C1234.0 924.0 1240.7 930.3 1250.0 930.0z" fill="#b4f0a6"/>
<path d="M1250.0 930.0L1234.8 915.6" stroke="#ff2d8a" stroke-width="0.8"/>
<path d="M1252.0 931.0C1259.6 934.3 1267.0 931.1 1273.0 922.0C1262.2 920.1 1254.9 923.2 1252.0 931.0z" fill="#b4f0a6"/>
<path d="M1252.0 931.0L1268.8 923.8" stroke="#ff2d8a" stroke-width="0.8"/>
<path d="M1247 943Q1251 915 1253 886" fill="none" stroke="#ff2d8a" stroke-width="1.3" stroke-linecap="round"/>
<path d="M1206.0 924.0C1211.8 923.2 1216.7 918.6 1220.0 911.0C1212.1 913.8 1207.2 918.3 1206.0 924.0z" fill="none" stroke="#ff9b4f" stroke-width="1.6"/>
<path d="M1238.0 943.0C1239.6 934.5 1234.7 928.6 1224.0 926.0C1224.5 937.0 1229.4 943.0 1238.0 943.0z" fill="#00bfff"/>
<path d="M1210.0 943.0C1213.0 939.5 1212.0 936.3 1207.0 934.0C1204.4 938.9 1205.5 942.0 1210.0 943.0z" fill="#00bfff"/>
<path d="M1277.0 930.0C1279.8 926.0 1279.1 921.1 1275.0 916.0C1272.5 922.1 1273.2 927.0 1277.0 930.0z" fill="#ffd42a"/>
<path d="M1277.0 943.0C1278.4 938.7 1276.3 934.8 1271.0 932.0C1270.5 938.0 1272.6 941.8 1277.0 943.0z" fill="#ff2d8a"/>
<!-- /workdir/fl/10_bot1.txt -->
<path d="M1168.0 946.0C1158.7 940.5 1146.1 941.2 1132.0 948.0C1146.7 953.2 1159.3 952.5 1168.0 946.0z" fill="#e85cd8"/>
<path d="M1168.0 946.0L1139.2 947.6" stroke="#00bfff" stroke-width="0.8"/>
<path d="M1156.0 958.0C1147.4 952.5 1135.8 953.2 1123.0 960.0C1136.6 965.2 1148.1 964.5 1156.0 958.0z" fill="#e85cd8"/>
<path d="M1156.0 958.0L1129.6 959.6" stroke="#00bfff" stroke-width="0.8"/>
<path d="M1152.0 963.0C1140.2 961.0 1129.7 967.7 1122.0 982.0C1138.3 981.1 1148.8 974.5 1152.0 963.0z" fill="#e85cd8"/>
<path d="M1152.0 963.0L1128.0 978.2" stroke="#00bfff" stroke-width="0.8"/>
<path d="M1157.0 960.0C1149.2 967.5 1147.4 979.4 1152.0 994.0C1160.6 981.4 1162.3 969.5 1157.0 960.0z" fill="#e85cd8"/>
<path d="M1157.0 960.0L1153.0 987.2" stroke="#00bfff" stroke-width="0.8"/>
<path d="M1166.0 948.0C1159.3 957.0 1159.3 969.6 1166.0 984.0C1172.7 969.6 1172.7 957.0 1166.0 948.0z" fill="#e85cd8"/>
<path d="M1166.0 948.0L1166.0 976.8" stroke="#00bfff" stroke-width="0.8"/>
<path d="M1178.0 940.0C1173.9 948.7 1176.4 958.8 1185.0 969.0C1188.0 956.0 1185.6 945.8 1178.0 940.0z" fill="#e85cd8"/>
<path d="M1178.0 940.0L1183.6 963.2" stroke="#00bfff" stroke-width="0.8"/>
<path d="M1172 940L1135 977" fill="none" stroke="#00bfff" stroke-width="1" stroke-linecap="round"/>
<path d="M1121.0 1007.0C1126.5 1005.7 1130.7 1000.8 1133.0 993.0C1125.7 996.4 1121.5 1001.3 1121.0 1007.0z" fill="none" stroke="#ff9b4f" stroke-width="1.6"/>
<path d="M1143.0 1011.0C1146.4 1007.1 1145.7 1002.6 1141.0 998.0C1137.9 1003.8 1138.6 1008.4 1143.0 1011.0z" fill="#ffd42a" fill-opacity="0.5" stroke="#ffd42a" stroke-width="1"/>
<path d="M1164.0 1011.0C1169.7 1007.2 1172.5 999.8 1172.0 990.0C1165.1 997.0 1162.3 1004.3 1164.0 1011.0z" fill="#ffd42a" fill-opacity="0.5" stroke="#ffd42a" stroke-width="1"/>
<path d="M1175.0 1011.0C1179.6 1008.8 1181.7 1003.9 1181.0 997.0C1175.5 1001.3 1173.4 1006.2 1175.0 1011.0z" fill="#ffd42a" fill-opacity="0.5" stroke="#ffd42a" stroke-width="1"/>
<path d="M1186.0 1011.0C1190.0 1010.1 1191.4 1007.0 1190.0 1002.0C1185.4 1004.2 1184.0 1007.4 1186.0 1011.0z" fill="#ffd42a" fill-opacity="0.5" stroke="#ffd42a" stroke-width="1"/>
<path d="M1214.0 947.0C1217.9 941.3 1215.8 937.1 1208.0 935.0C1205.0 942.5 1207.1 946.7 1214.0 947.0z" fill="#00bfff"/>
<path d="M1214.0 947.0L1209.2 937.4" stroke="#ff2d8a" stroke-width="0.8"/>
<path d="M1241.0 951.0C1243.4 942.4 1238.9 936.8 1228.0 935.0C1227.5 946.0 1232.1 951.6 1241.0 951.0z" fill="#00bfff"/>
<path d="M1241.0 951.0L1230.6 938.2" stroke="#ff2d8a" stroke-width="0.8"/>
<path d="M1243.0 952.0C1249.7 956.2 1256.7 954.1 1263.0 946.0C1253.3 942.7 1246.3 944.8 1243.0 952.0z" fill="#00bfff"/>
<path d="M1243.0 952.0L1259.0 947.2" stroke="#ff2d8a" stroke-width="0.8"/>
<path d="M1232.0 992.0C1239.5 993.4 1245.8 989.2 1250.0 980.0C1239.8 980.4 1233.5 984.6 1232.0 992.0z" fill="#00bfff"/>
<path d="M1232.0 992.0L1246.4 982.4" stroke="#ff2d8a" stroke-width="0.8"/>
<path d="M1237.0 994.0C1237.1 1001.9 1242.7 1007.8 1253.0 1011.0C1250.5 1000.6 1244.9 994.6 1237.0 994.0z" fill="#00bfff"/>
<path d="M1237.0 994.0L1249.8 1007.6" stroke="#ff2d8a" stroke-width="0.8"/>
<path d="M1265.0 1006.0C1268.7 1009.4 1272.9 1008.7 1277.0 1004.0C1271.5 1000.9 1267.3 1001.6 1265.0 1006.0z" fill="#00bfff"/>
<path d="M1227.0 970.0C1231.9 962.8 1230.5 954.1 1223.0 945.0C1218.7 955.9 1220.1 964.7 1227.0 970.0z" fill="#b4f0a6"/>
<path d="M1227.0 970.0L1223.8 950.0" stroke="#ff2d8a" stroke-width="0.8"/>
<path d="M1228.0 970.0C1233.1 974.8 1239.4 974.1 1246.0 968.0C1238.2 963.5 1231.9 964.2 1228.0 970.0z" fill="#b4f0a6"/>
<path d="M1228.0 970.0L1242.4 968.4" stroke="#ff2d8a" stroke-width="0.8"/>
<path d="M1252.0 995.0C1260.1 993.4 1264.3 986.8 1264.0 976.0C1254.1 980.4 1249.9 987.1 1252.0 995.0z" fill="#b4f0a6"/>
<path d="M1252.0 995.0L1261.6 979.8" stroke="#ff2d8a" stroke-width="0.8"/>
<path d="M1273.0 994.0C1278.5 991.1 1279.9 985.5 1277.0 978.0C1270.9 983.3 1269.5 988.9 1273.0 994.0z" fill="#b4f0a6"/>
<path d="M1214.0 1000.0C1207.5 999.0 1203.6 1002.8 1203.0 1011.0C1211.2 1010.4 1215.0 1006.5 1214.0 1000.0z" fill="#b4f0a6"/>
<path d="M1214.0 1000.0L1205.2 1008.8" stroke="#ff2d8a" stroke-width="0.8"/>
<path d="M1218.0 1000.0C1221.5 1005.5 1227.8 1006.9 1236.0 1004.0C1229.8 997.9 1223.5 996.5 1218.0 1000.0z" fill="#b4f0a6"/>
<path d="M1218.0 1000.0L1232.4 1003.2" stroke="#ff2d8a" stroke-width="0.8"/>
<path d="M1172 984Q1190 984 1207 988Q1230 996 1277 994" fill="none" stroke="#ff2d8a" stroke-width="1.5" stroke-linecap="round"/>
<path d="M1192 985Q1230 978 1254 955L1277 942" fill="none" stroke="#ff2d8a" stroke-width="1.3" stroke-linecap="round"/>
<path d="M1195 984Q1230 970 1240 951L1247 935" fill="none" stroke="#ff2d8a" stroke-width="1.3" stroke-linecap="round"/>
<path d="M1205 990Q1218 998 1226 1011" fill="none" stroke="#ff2d8a" stroke-width="1.2" stroke-linecap="round"/>
<path d="M1248 997Q1260 1000 1267 1011" fill="none" stroke="#ff2d8a" stroke-width="1.2" stroke-linecap="round"/>
<path d="M1212 978Q1219 965 1217 955L1214 947" fill="none" stroke="#ff2d8a" stroke-width="1.3" stroke-linecap="round"/>
<path d="M1262.0 965.0C1266.2 962.4 1267.6 957.5 1266.0 951.0C1261.2 955.7 1259.8 960.6 1262.0 965.0z" fill="none" stroke="#ff2d8a" stroke-width="1"/>
<path d="M1253.0 970.0C1256.0 973.8 1260.9 974.5 1267.0 972.0C1261.9 967.9 1257.0 967.2 1253.0 970.0z" fill="none" stroke="#ff2d8a" stroke-width="1"/>
<path d="M1252.0 967.0C1255.1 966.0 1255.8 963.5 1254.0 960.0C1250.6 962.1 1249.9 964.5 1252.0 967.0z" fill="#ff2d8a"/>
<path d="M1263.0 962.0C1266.7 964.4 1271.6 964.1 1277.0 961.0C1271.2 958.7 1266.3 959.1 1263.0 962.0z" fill="#ff2d8a"/>
<path d="M1270.0 936.0C1268.3 941.0 1270.8 945.2 1277.0 948.0C1277.6 941.2 1275.2 937.0 1270.0 936.0z" fill="none" stroke="#ff2d8a" stroke-width="1"/>
<!-- /workdir/fl/11_bot2.txt -->
<path d="M986.0 963.0C981.1 954.2 971.6 951.7 959.0 956.0C968.0 965.9 977.4 968.3 986.0 963.0z" fill="#00bfff"/>
<path d="M986.0 963.0L964.4 957.4" stroke="#ffd42a" stroke-width="0.8"/>
<path d="M986.0 964.0C977.2 968.0 974.8 976.4 979.0 988.0C988.8 980.4 991.3 972.0 986.0 964.0z" fill="#00bfff"/>
<path d="M986.0 964.0L980.4 983.2" stroke="#ffd42a" stroke-width="0.8"/>
<path d="M975.0 967.0C966.8 965.1 961.2 969.6 959.0 980.0C969.6 980.0 975.2 975.4 975.0 967.0z" fill="#00bfff"/>
<path d="M975.0 967.0L962.2 977.4" stroke="#ffd42a" stroke-width="0.8"/>
<path d="M1018.0 940.0C1012.8 946.1 1013.9 953.4 1021.0 961.0C1025.7 951.8 1024.7 944.4 1018.0 940.0z" fill="#00bfff"/>
<path d="M1018.0 940.0L1020.4 956.8" stroke="#ffd42a" stroke-width="0.8"/>
<path d="M1001.0 953.0C997.6 944.4 989.2 940.9 977.0 943.0C984.0 953.1 992.4 956.6 1001.0 953.0z" fill="#f9a6f7"/>
<path d="M1001.0 953.0L981.8 945.0" stroke="#ffd42a" stroke-width="0.8"/>
<path d="M1003.0 954.0C995.6 959.5 994.6 968.2 1000.0 979.0C1007.8 969.8 1008.9 961.0 1003.0 954.0z" fill="#f9a6f7"/>
<path d="M1003.0 954.0L1000.6 974.0" stroke="#ffd42a" stroke-width="0.8"/>
<path d="M961 975Q987 963 1001 952L1017 940" fill="none" stroke="#ffd42a" stroke-width="1.3" stroke-linecap="round"/>
<path d="M1024.0 977.0C1016.6 974.6 1007.5 976.7 998.0 983.0C1009.3 984.5 1018.4 982.4 1024.0 977.0z" fill="#e85cd8"/>
<path d="M1024.0 977.0C1014.2 977.9 1004.0 984.5 995.0 996.0C1009.2 992.3 1019.3 985.6 1024.0 977.0z" fill="#e85cd8"/>
<path d="M1024.0 977.0C1014.4 980.3 1005.6 989.4 999.0 1003.0C1012.4 995.8 1021.1 986.7 1024.0 977.0z" fill="#e85cd8"/>
<path d="M1024.0 977.0C1015.9 982.3 1010.3 992.8 1008.0 1007.0C1018.5 997.2 1024.1 986.7 1024.0 977.0z" fill="#e85cd8"/>
<path d="M1024.0 977.0C1018.4 983.9 1015.9 994.7 1017.0 1008.0C1023.7 996.5 1026.1 985.6 1024.0 977.0z" fill="#e85cd8"/>
<path d="M1024.0 977.0C1020.7 983.0 1020.7 991.4 1024.0 1001.0C1027.3 991.4 1027.3 983.0 1024.0 977.0z" fill="#e85cd8"/>
<path d="M1010.0 975.0C1015.2 977.9 1021.1 976.5 1027.0 971.0C1019.3 968.7 1013.3 970.1 1010.0 975.0z" fill="#ffd42a"/>
<path d="M1025.0 975.0C1020.2 979.7 1020.9 985.3 1027.0 991.0C1031.5 983.9 1030.8 978.3 1025.0 975.0z" fill="#ffd42a"/>
<path d="M1027 973Q1034 965 1036 958L1040 942" fill="none" stroke="#ffd42a" stroke-width="1.2" stroke-linecap="round"/>
<path d="M1040.0 942.0C1036.1 940.3 1033.0 942.1 1031.0 947.0C1036.2 947.9 1039.4 946.2 1040.0 942.0z" fill="#ffd42a"/>
<path d="M1037.0 955.0C1032.3 954.3 1028.4 957.1 1026.0 963.0C1032.4 962.5 1036.2 959.7 1037.0 955.0z" fill="none" stroke="#ffd42a" stroke-width="1"/>
<path d="M1040.0 947.0C1038.6 951.2 1040.7 954.7 1046.0 957.0C1046.5 951.3 1044.4 947.8 1040.0 947.0z" fill="none" stroke="#ffd42a" stroke-width="1"/>
<path d="M1037.0 959.0C1035.2 962.4 1036.2 966.3 1040.0 970.0C1041.4 964.9 1040.3 961.1 1037.0 959.0z" fill="none" stroke="#ffd42a" stroke-width="1"/>
<path d="M1068.0 956.0C1058.9 955.0 1053.7 960.6 1053.0 972.0C1064.3 970.6 1069.6 965.0 1068.0 956.0z" fill="#00bfff"/>
<path d="M1068.0 956.0L1056.0 968.8" stroke="#ffd42a" stroke-width="0.8"/>
<path d="M1072.0 963.0C1075.4 971.6 1083.8 975.1 1096.0 973.0C1089.0 962.9 1080.6 959.4 1072.0 963.0z" fill="#00bfff"/>
<path d="M1072.0 963.0L1091.2 971.0" stroke="#ffd42a" stroke-width="0.8"/>
<path d="M1079.0 979.0C1083.1 987.1 1091.5 989.6 1103.0 986.0C1095.3 976.8 1086.9 974.4 1079.0 979.0z" fill="#00bfff"/>
<path d="M1079.0 979.0L1098.2 984.6" stroke="#ffd42a" stroke-width="0.8"/>
<path d="M1076.0 985.0C1068.7 989.3 1067.6 996.7 1073.0 1006.0C1080.8 998.5 1081.8 991.2 1076.0 985.0z" fill="#00bfff"/>
<path d="M1076.0 985.0L1073.6 1001.8" stroke="#ffd42a" stroke-width="0.8"/>
<path d="M1060.0 983.0C1052.6 978.1 1044.5 980.2 1037.0 989.0C1047.9 993.0 1055.9 990.9 1060.0 983.0z" fill="#00bfff"/>
<path d="M1060.0 983.0L1041.6 987.8" stroke="#ffd42a" stroke-width="0.8"/>
<path d="M1058.0 992.0C1055.3 999.4 1058.8 1005.7 1068.0 1010.0C1069.2 999.9 1065.7 993.6 1058.0 992.0z" fill="#00bfff"/>
<path d="M1058.0 992.0L1066.0 1006.4" stroke="#ffd42a" stroke-width="0.8"/>
<path d="M1051.0 997.0C1043.6 992.4 1036.3 994.9 1030.0 1004.0C1040.5 1007.5 1047.9 1005.1 1051.0 997.0z" fill="#00bfff"/>
<path d="M1051.0 997.0L1034.2 1002.6" stroke="#ffd42a" stroke-width="0.8"/>
<path d="M1062.0 940.0C1054.0 939.4 1050.2 944.3 1051.0 954.0C1060.6 952.5 1064.5 947.6 1062.0 940.0z" fill="#00bfff"/>
<path d="M1062.0 940.0L1053.2 951.2" stroke="#ffd42a" stroke-width="0.8"/>
<path d="M1079.0 944.0C1076.3 951.4 1079.8 957.7 1089.0 962.0C1090.2 951.9 1086.7 945.6 1079.0 944.0z" fill="#00bfff"/>
<path d="M1079.0 944.0L1087.0 958.4" stroke="#ffd42a" stroke-width="0.8"/>
<path d="M1083.0 942.0C1087.5 945.7 1093.4 945.4 1100.0 941.0C1093.0 937.4 1087.0 937.8 1083.0 942.0z" fill="#00bfff"/>
<path d="M1091.0 947.0C1096.1 953.9 1105.2 956.3 1117.0 954.0C1108.0 946.1 1098.9 943.6 1091.0 947.0z" fill="#f9a6f7"/>
<path d="M1091.0 947.0L1111.8 952.6" stroke="#ffd42a" stroke-width="0.8"/>
<path d="M1087.0 997.0C1093.4 1002.8 1102.8 1003.5 1114.0 999.0C1103.6 992.9 1094.1 992.2 1087.0 997.0z" fill="#f9a6f7"/>
<path d="M1087.0 997.0L1108.6 998.6" stroke="#ffd42a" stroke-width="0.8"/>
<path d="M1086.0 1011.0C1090.0 1006.3 1088.6 1002.1 1082.0 999.0C1078.6 1005.5 1080.0 1009.7 1086.0 1011.0z" fill="#f9a6f7"/>
<path d="M1052.0 1011.0C1055.4 1007.9 1054.7 1004.7 1050.0 1002.0C1046.9 1006.5 1047.6 1009.6 1052.0 1011.0z" fill="#f9a6f7"/>
<path d="M1067 940Q1069 965 1078 985Q1088 998 1100 1011" fill="none" stroke="#ffd42a" stroke-width="1.3" stroke-linecap="round"/>
<path d="M1070 970Q1060 990 1049 1011" fill="none" stroke="#ffd42a" stroke-width="1.2" stroke-linecap="round"/>
<path d="M1073 940Q1084 944 1120 954" fill="none" stroke="#ffd42a" stroke-width="1.1" stroke-linecap="round"/>
<circle cx="960.0" cy="1000.0" r="2.0" fill="#ffd42a"/>
<!-- /workdir/fl/12_bot3.txt -->
<path d="M841.0 940.0C833.5 942.3 827.2 949.3 823.0 960.0C833.2 954.7 839.5 947.7 841.0 940.0z" fill="#ffd42a" fill-opacity="0.55" stroke="#ffd42a" stroke-width="1"/>
<path d="M848.0 940.0C840.3 943.9 834.0 952.7 830.0 965.0C840.4 957.3 846.7 948.6 848.0 940.0z" fill="#ffd42a" fill-opacity="0.55" stroke="#ffd42a" stroke-width="1"/>
<path d="M852.0 940.0C844.9 946.1 840.0 957.0 838.0 971.0C847.2 960.2 852.1 949.4 852.0 940.0z" fill="#ffd42a" fill-opacity="0.55" stroke="#ffd42a" stroke-width="1"/>
<path d="M860.0 940.0C857.0 947.3 859.1 956.1 866.0 965.0C868.1 953.9 866.0 945.2 860.0 940.0z" fill="#ffd42a" fill-opacity="0.55" stroke="#ffd42a" stroke-width="1"/>
<path d="M878.0 940.0C874.9 943.8 876.0 947.6 881.0 951.0C883.6 945.6 882.6 941.7 878.0 940.0z" fill="#ffd42a"/>
<circle cx="804.0" cy="964.0" r="5.5" fill="#e85cd8"/>
<circle cx="805.0" cy="977.0" r="3.5" fill="#e85cd8"/>
<circle cx="806.0" cy="997.0" r="5.5" fill="#e85cd8"/>
<path d="M800 984Q838 988 851 984" fill="none" stroke="#00bfff" stroke-width="1.3" stroke-linecap="round"/>
<path d="M836.0 986.0C833.0 980.2 826.4 976.0 817.0 974.0C822.8 981.6 829.5 985.8 836.0 986.0z" fill="none" stroke="#00bfff" stroke-width="1"/>
<path d="M831.0 988.0C825.8 986.7 820.6 989.2 816.0 995.0C823.4 995.2 828.7 992.8 831.0 988.0z" fill="#00bfff" fill-opacity="0.5" stroke="#00bfff" stroke-width="1"/>
<path d="M837.0 987.0C835.3 988.8 835.6 990.9 838.0 993.0C839.6 990.3 839.2 988.2 837.0 987.0z" fill="none" stroke="#00bfff" stroke-width="1"/>
<path d="M897 946Q896 965 892 972Q887 985 880 1011" fill="none" stroke="#00bfff" stroke-width="2" stroke-linecap="round"/>
<path d="M893.0 970.0C877.7 971.0 862.6 981.5 850.0 1000.0C871.8 994.5 886.8 984.0 893.0 970.0z" fill="#00bfff"/>
<path d="M893.0 970.0L858.6 994.0" stroke="#ffffff" stroke-width="0.8"/>
<path d="M895.0 972.0C890.1 985.1 895.3 998.7 910.0 1011.0C912.7 992.1 907.4 978.4 895.0 972.0z" fill="#00bfff"/>
<path d="M895.0 972.0L907.0 1003.2" stroke="#ffffff" stroke-width="0.8"/>
<path d="M884.0 993.0C873.0 990.9 863.9 997.2 858.0 1011.0C872.9 1010.4 882.0 1004.1 884.0 993.0z" fill="#00bfff"/>
<path d="M884.0 993.0L863.2 1007.4" stroke="#ffffff" stroke-width="0.8"/>
<path d="M886.0 990.0C881.4 997.4 883.9 1004.7 893.0 1011.0C896.5 1000.5 894.1 993.1 886.0 990.0z" fill="#00bfff"/>
<path d="M886.0 990.0L891.6 1006.8" stroke="#ffffff" stroke-width="0.8"/>
<path d="M926 940Q926 955 912 978" fill="none" stroke="#ff2d8a" stroke-width="1" stroke-linecap="round"/>
<path d="M925.0 950.0C919.4 947.4 913.1 949.2 907.0 955.0C915.3 956.8 921.6 955.1 925.0 950.0z" fill="#ff2d8a" fill-opacity="0.3" stroke="#ff2d8a" stroke-width="1"/>
<path d="M926.0 950.0C928.6 956.0 934.9 959.5 944.0 960.0C938.7 952.5 932.4 949.0 926.0 950.0z" fill="#ff2d8a" fill-opacity="0.3" stroke="#ff2d8a" stroke-width="1"/>
<path d="M925.0 951.0C917.1 956.4 911.8 966.9 910.0 981.0C920.2 971.1 925.4 960.6 925.0 951.0z" fill="#ff2d8a" fill-opacity="0.3" stroke="#ff2d8a" stroke-width="1"/>
<path d="M927.0 952.0C926.3 958.9 930.1 965.9 938.0 972.0C937.1 962.1 933.2 955.1 927.0 952.0z" fill="#ff2d8a" fill-opacity="0.3" stroke="#ff2d8a" stroke-width="1"/>
<path d="M927.0 940.0C923.3 937.9 919.8 939.3 917.0 944.0C922.2 945.5 925.7 944.1 927.0 940.0z" fill="#ff2d8a" fill-opacity="0.3" stroke="#ff2d8a" stroke-width="1"/>
<path d="M940.0 940.0C939.2 943.2 941.0 945.3 945.0 946.0C945.0 941.9 943.3 939.8 940.0 940.0z" fill="#ff2d8a"/>
<path d="M960.0 982.0C956.8 976.7 952.2 976.7 947.0 982.0C952.2 987.3 956.8 987.3 960.0 982.0z" fill="#00bfff"/>
<circle cx="938.0" cy="1002.0" r="5.5" fill="#ffd42a"/>
<circle cx="954.0" cy="999.0" r="6.5" fill="#ffd42a"/>
<path d="M934 995L935 997 M956 993L957 991" fill="none" stroke="#ff2d8a" stroke-width="1.5" stroke-linecap="round"/>
<path d="M940 1008L941 1010 M951 1006L951 1010" fill="none" stroke="#1e5e0b" stroke-width="1.5" stroke-linecap="round"/>
<!-- /workdir/fl/13_bot4.txt -->
<path d="M655.0 955.0C662.6 952.7 666.8 945.7 667.0 935.0C657.6 940.3 653.4 947.3 655.0 955.0z" fill="#ff9b4f"/>
<path d="M655.0 955.0L664.6 939.0" stroke="#0000cc" stroke-width="0.8"/>
<path d="M671.0 947.0C676.4 946.4 679.6 942.2 680.0 935.0C673.2 937.4 670.1 941.6 671.0 947.0z" fill="#ff9b4f"/>
<path d="M710.0 942.0C720.2 949.8 736.3 955.4 756.0 958.0C738.9 947.8 722.8 942.2 710.0 942.0z" fill="#b4f0a6" fill-opacity="0.5" stroke="#b4f0a6" stroke-width="1"/>
<path d="M735.0 941.0C743.1 947.8 756.1 950.9 772.0 950.0C758.3 941.9 745.4 938.7 735.0 941.0z" fill="#1e5e0b" fill-opacity="0.6" stroke="#1e5e0b" stroke-width="1"/>
<path d="M765.0 941.0C769.0 943.7 774.6 943.7 781.0 941.0C774.6 938.3 769.0 938.3 765.0 941.0z" fill="#b4f0a6"/>
<path d="M722.0 977.0C712.4 967.2 696.3 958.5 676.0 952.0C692.5 965.5 708.6 974.3 722.0 977.0z" fill="#00bfff"/>
<path d="M722.0 977.0C718.3 965.6 707.8 954.7 692.0 946.0C700.2 962.1 710.7 972.9 722.0 977.0z" fill="#e85cd8"/>
<path d="M722.0 977.0C709.5 970.6 690.9 967.1 669.0 967.0C689.5 974.9 708.0 978.4 722.0 977.0z" fill="#00bfff"/>
<path d="M722.0 977.0C708.7 973.3 690.1 973.6 669.0 978.0C690.3 981.6 708.8 981.2 722.0 977.0z" fill="#e85cd8"/>
<path d="M722.0 977.0C710.5 975.9 695.8 979.7 680.0 988.0C697.8 987.5 712.5 983.6 722.0 977.0z" fill="#00bfff"/>
<path d="M722.0 977.0C711.7 979.1 701.2 987.1 692.0 1000.0C706.8 994.5 717.3 986.4 722.0 977.0z" fill="#e85cd8"/>
<path d="M727.0 976.0C729.7 967.6 725.5 960.6 715.0 956.0C714.1 967.4 718.3 974.4 727.0 976.0z" fill="#ffd42a" fill-opacity="0.6" stroke="#ffd42a" stroke-width="1"/>
<path d="M727.0 978.0C718.0 978.6 712.8 985.3 712.0 997.0C723.2 993.5 728.5 986.9 727.0 978.0z" fill="#ffd42a" fill-opacity="0.6" stroke="#ffd42a" stroke-width="1"/>
<path d="M728 977Q745 975 755 972" fill="none" stroke="#ffd42a" stroke-width="1.5" stroke-linecap="round"/>
<path d="M625.0 985.0C633.9 984.6 642.6 978.6 650.0 968.0C637.4 971.0 628.6 976.9 625.0 985.0z" fill="#ffd42a"/>
<path d="M625.0 988.0C635.2 990.5 648.2 987.7 662.0 980.0C646.2 978.7 633.3 981.5 625.0 988.0z" fill="#ff2d8a"/>
<path d="M625.0 990.0C637.0 994.0 653.8 994.0 673.0 990.0C653.8 986.0 637.0 986.0 625.0 990.0z" fill="#ffd42a"/>
<path d="M625.0 993.0C636.0 999.6 652.4 1002.4 672.0 1001.0C654.0 993.2 637.5 990.4 625.0 993.0z" fill="#ff2d8a"/>
<path d="M625.0 996.0C628.5 1004.3 637.3 1009.6 650.0 1011.0C642.7 1000.4 634.0 995.2 625.0 996.0z" fill="#ffd42a"/>
<path d="M630.0 998.0C635.9 1004.9 646.4 1009.5 660.0 1011.0C649.6 1002.1 639.1 997.6 630.0 998.0z" fill="#ff2d8a"/>
<path d="M624.0 981.0C629.0 980.8 631.5 977.3 631.0 971.0C624.9 972.7 622.5 976.2 624.0 981.0z" fill="#00bfff"/>
<path d="M624.0 1000.0C622.2 1004.1 624.0 1008.0 629.0 1011.0C630.0 1005.2 628.3 1001.4 624.0 1000.0z" fill="#00bfff"/>
<path d="M797 985L779 965 M797 985L794 962 M797 985L787 974 M797 985L770 978 M797 985L775 993 M797 985L794 995 M797 985L778 1007 M797 985L794 1007 M797 985L800 960 M797 985L800 1000" fill="none" stroke="#00bfff" stroke-width="1.1" stroke-linecap="round"/>
<circle cx="779.0" cy="965.0" r="5.5" fill="#e85cd8"/>
<circle cx="794.0" cy="962.0" r="5.0" fill="#e85cd8"/>
<circle cx="787.0" cy="974.0" r="3.5" fill="#e85cd8"/>
<circle cx="770.0" cy="978.0" r="6.0" fill="#e85cd8"/>
<circle cx="775.0" cy="993.0" r="5.0" fill="#e85cd8"/>
<circle cx="794.0" cy="995.0" r="4.0" fill="#e85cd8"/>
<circle cx="778.0" cy="1007.0" r="5.0" fill="#e85cd8"/>
<circle cx="794.0" cy="1007.0" r="5.0" fill="#e85cd8"/>
<path d="M743.0 1011.0C739.5 1005.9 732.9 1003.1 724.0 1003.0C730.3 1009.3 737.0 1012.1 743.0 1011.0z" fill="#ff9b4f" fill-opacity="0.4" stroke="#ff9b4f" stroke-width="1"/>
<path d="M760.0 1011.0C758.1 1005.2 752.5 1000.6 744.0 998.0C748.3 1005.8 753.9 1010.3 760.0 1011.0z" fill="#ff9b4f" fill-opacity="0.4" stroke="#ff9b4f" stroke-width="1"/>
<!-- /workdir/fl/14_left1.txt -->
<path d="M632.0 335.0C633.4 340.9 638.3 343.4 646.0 342.0C642.5 335.0 637.6 332.6 632.0 335.0z" fill="#e85cd8"/>
<path d="M652.0 334.0C653.0 337.6 656.1 339.3 661.0 339.0C658.7 334.7 655.5 332.9 652.0 334.0z" fill="#00bfff"/>
<path d="M626.0 362.0C632.8 363.1 639.8 359.6 646.0 352.0C636.2 352.4 629.2 355.9 626.0 362.0z" fill="none" stroke="#ff9b4f" stroke-width="1.6"/>
<path d="M683.0 334.0C685.4 339.8 691.3 342.9 700.0 343.0C695.1 335.9 689.1 332.7 683.0 334.0z" fill="#ff2d8a" fill-opacity="0.3" stroke="#ff2d8a" stroke-width="1"/>
<path d="M668.0 372.0C676.0 363.5 676.0 351.6 668.0 338.0C660.0 351.6 660.0 363.5 668.0 372.0z" fill="#ffd42a"/>
<path d="M668.0 372.0L668.0 344.8" stroke="#0000cc" stroke-width="0.8"/>
<path d="M668.0 390.0C669.0 378.5 661.6 369.4 647.0 364.0C649.2 379.4 656.5 388.5 668.0 390.0z" fill="#ffd42a"/>
<path d="M668.0 390.0L651.2 369.2" stroke="#0000cc" stroke-width="0.8"/>
<path d="M670.0 390.0C680.3 389.8 687.3 382.4 690.0 369.0C676.7 372.4 669.7 379.7 670.0 390.0z" fill="#ffd42a"/>
<path d="M670.0 390.0L686.0 373.2" stroke="#0000cc" stroke-width="0.8"/>
<path d="M666.0 414.0C665.1 403.0 656.7 394.9 642.0 391.0C646.5 405.5 654.9 413.5 666.0 414.0z" fill="#f9a6f7"/>
<path d="M666.0 414.0L646.8 395.6" stroke="#0000cc" stroke-width="0.8"/>
<path d="M668.0 413.0C678.1 415.1 686.5 409.5 692.0 397.0C678.3 397.3 669.9 402.9 668.0 413.0z" fill="#f9a6f7"/>
<path d="M668.0 413.0L687.2 400.2" stroke="#0000cc" stroke-width="0.8"/>
<path d="M659.0 437.0C659.9 424.5 651.9 414.7 636.0 409.0C638.5 425.7 646.6 435.5 659.0 437.0z" fill="#ff9b4f"/>
<path d="M659.0 437.0L640.6 414.6" stroke="#0000cc" stroke-width="0.8"/>
<path d="M660.0 437.0C668.6 440.6 677.0 437.1 684.0 427.0C671.8 424.9 663.4 428.4 660.0 437.0z" fill="#ff9b4f"/>
<path d="M660.0 437.0L679.2 429.0" stroke="#0000cc" stroke-width="0.8"/>
<path d="M645.0 459.0C648.5 450.0 645.3 439.8 636.0 430.0C633.9 443.4 637.0 453.5 645.0 459.0z" fill="#f9a6f7"/>
<path d="M645.0 459.0L637.8 435.8" stroke="#0000cc" stroke-width="0.8"/>
<path d="M650.0 459.0C655.4 461.6 661.3 459.8 667.0 454.0C659.1 452.2 653.1 453.9 650.0 459.0z" fill="#f9a6f7"/>
<path d="M668 356Q670 395 666 414Q660 440 645 460Q635 472 625 479" fill="none" stroke="#0000cc" stroke-width="1.4" stroke-linecap="round"/>
<path d="M630.0 446.0C635.2 439.0 633.5 431.3 625.0 424.0C620.5 434.3 622.3 442.0 630.0 446.0z" fill="#ffd42a"/>
<path d="M627 434Q632 445 633 460" fill="none" stroke="#0000cc" stroke-width="2" stroke-linecap="round"/>
<path d="M700.0 414.0C702.9 407.6 701.5 399.5 696.0 391.0C693.7 400.9 695.1 408.9 700.0 414.0z" fill="#ff2d8a"/>
<path d="M700.0 428.0C703.5 420.9 700.7 414.3 692.0 409.0C689.7 418.9 692.5 425.6 700.0 428.0z" fill="#0000cc"/>
<path d="M700 430Q690 445 677 460" fill="none" stroke="#0000cc" stroke-width="1.3" stroke-linecap="round"/>
<path d="M685.0 445.0C689.0 441.9 690.1 436.7 688.0 430.0C683.5 435.3 682.5 440.6 685.0 445.0z" fill="none" stroke="#0000cc" stroke-width="1"/>
<path d="M690.0 444.0C693.2 446.8 696.7 446.1 700.0 442.0C695.3 439.5 691.8 440.2 690.0 444.0z" fill="#0000cc"/>
<path d="M675.0 459.0C677.4 455.8 677.1 451.6 674.0 447.0C671.7 452.0 672.1 456.2 675.0 459.0z" fill="#0000cc"/>
<path d="M683.0 455.0C685.5 458.3 689.0 458.3 693.0 455.0C689.0 451.7 685.5 451.7 683.0 455.0z" fill="none" stroke="#0000cc" stroke-width="1"/>
<!-- /workdir/fl/15_left2.txt -->
<path d="M653.0 485.0C661.6 484.5 668.6 478.2 673.0 467.0C661.4 470.2 654.4 476.5 653.0 485.0z" fill="#ff9b4f"/>
<path d="M653.0 485.0L669.0 470.6" stroke="#0000cc" stroke-width="0.8"/>
<path d="M658.0 487.0C659.9 498.5 669.3 506.9 685.0 511.0C679.1 495.9 669.6 487.5 658.0 487.0z" fill="#ff9b4f"/>
<path d="M658.0 487.0L679.6 506.2" stroke="#0000cc" stroke-width="0.8"/>
<path d="M649.0 508.0C639.5 513.8 636.0 525.0 639.0 540.0C650.0 529.4 653.5 518.2 649.0 508.0z" fill="#ff9b4f"/>
<path d="M649.0 508.0L641.0 533.6" stroke="#0000cc" stroke-width="0.8"/>
<path d="M677.0 485.0C686.2 482.7 691.1 474.7 691.0 462.0C679.7 467.7 674.8 475.8 677.0 485.0z" fill="#f9a6f7"/>
<path d="M677.0 485.0L688.2 466.6" stroke="#0000cc" stroke-width="0.8"/>
<path d="M640.0 496.0C645.1 500.2 652.4 500.6 661.0 497.0C652.8 492.6 645.4 492.3 640.0 496.0z" fill="#f9a6f7"/>
<path d="M633.0 494.0C625.6 495.7 622.8 501.7 625.0 511.0C633.6 506.7 636.4 500.8 633.0 494.0z" fill="#f9a6f7"/>
<path d="M633.0 494.0L626.6 507.6" stroke="#0000cc" stroke-width="0.8"/>
<path d="M657.0 512.0C658.1 522.4 666.1 529.0 680.0 531.0C675.5 517.8 667.4 511.1 657.0 512.0z" fill="#f9a6f7"/>
<path d="M657.0 512.0L675.4 527.2" stroke="#0000cc" stroke-width="0.8"/>
<path d="M697.0 497.0C691.8 504.6 692.8 514.4 700.0 525.0C704.8 513.2 703.7 503.4 697.0 497.0z" fill="#f9a6f7"/>
<path d="M697.0 497.0L699.4 519.4" stroke="#0000cc" stroke-width="0.8"/>
<path d="M644.0 459.0C647.6 463.7 653.5 464.7 661.0 462.0C654.9 456.9 648.9 455.8 644.0 459.0z" fill="#f9a6f7"/>
<path d="M625 482Q650 470 672 459" fill="none" stroke="#0000cc" stroke-width="1.4" stroke-linecap="round"/>
<path d="M625 485Q650 484 675 486Q690 486 700 484" fill="none" stroke="#0000cc" stroke-width="1.6" stroke-linecap="round"/>
<path d="M675 487L700 500" fill="none" stroke="#0000cc" stroke-width="1.3" stroke-linecap="round"/>
<path d="M625 487Q650 510 668 524" fill="none" stroke="#0000cc" stroke-width="1.4" stroke-linecap="round"/>
<path d="M667.0 573.0C676.5 566.3 680.0 554.0 677.0 538.0C666.0 550.0 662.5 562.2 667.0 573.0z" fill="#ff9b4f"/>
<path d="M667.0 573.0L675.0 545.0" stroke="#0000cc" stroke-width="0.8"/>
<path d="M655.0 583.0C663.1 575.1 665.2 562.5 661.0 547.0C652.0 560.3 649.9 572.9 655.0 583.0z" fill="#ff9b4f"/>
<path d="M655.0 583.0L659.8 554.2" stroke="#0000cc" stroke-width="0.8"/>
<path d="M640.0 588.0C645.7 580.5 645.4 570.4 639.0 559.0C633.4 570.8 633.8 581.0 640.0 588.0z" fill="#ff9b4f"/>
<path d="M640.0 588.0L639.2 564.8" stroke="#0000cc" stroke-width="0.8"/>
<path d="M672.0 570.0C682.1 573.4 691.9 568.8 700.0 557.0C685.7 555.6 675.9 560.1 672.0 570.0z" fill="#ff9b4f"/>
<path d="M672.0 570.0L694.4 559.6" stroke="#0000cc" stroke-width="0.8"/>
<path d="M670.0 574.0C676.7 580.9 687.2 582.3 700.0 578.0C688.8 570.5 678.3 569.1 670.0 574.0z" fill="#ff9b4f"/>
<path d="M670.0 574.0L694.0 577.2" stroke="#0000cc" stroke-width="0.8"/>
<path d="M660.0 584.0C664.6 590.4 672.7 592.2 683.0 589.0C674.9 581.8 666.9 580.1 660.0 584.0z" fill="#ff9b4f"/>
<path d="M650 589Q660 578 667 573Q680 567 700 561" fill="none" stroke="#0000cc" stroke-width="1.3" stroke-linecap="round"/>
<!-- /workdir/fl/16_left3.txt -->
<path d="M642.0 592.0C649.3 599.6 661.5 603.1 677.0 602.0C664.5 592.9 652.2 589.4 642.0 592.0z" fill="#ff9b4f"/>
<path d="M642.0 592.0L670.0 600.0" stroke="#0000cc" stroke-width="0.8"/>
<path d="M662.0 588.0C667.8 592.2 676.2 592.6 686.0 589.0C676.6 584.6 668.2 584.3 662.0 588.0z" fill="#ff9b4f"/>
<path d="M625 600Q636 596 642 592L650 588" fill="none" stroke="#0000cc" stroke-width="1.2" stroke-linecap="round"/>
<path d="M633.0 660.0C642.6 651.4 645.1 637.4 640.0 620.0C629.3 634.6 626.9 648.6 633.0 660.0z" fill="#b4f0a6"/>
<path d="M633.0 660.0L638.6 628.0" stroke="#ff2d8a" stroke-width="0.8"/>
<path d="M650.0 650.0C661.4 643.6 667.0 630.3 666.0 612.0C652.2 624.1 646.6 637.4 650.0 650.0z" fill="#b4f0a6"/>
<path d="M650.0 650.0L662.8 619.6" stroke="#ff2d8a" stroke-width="0.8"/>
<path d="M666.0 640.0C677.7 637.4 685.1 627.3 687.0 611.0C672.1 617.9 664.8 628.1 666.0 640.0z" fill="#b4f0a6"/>
<path d="M666.0 640.0L682.8 616.8" stroke="#ff2d8a" stroke-width="0.8"/>
<path d="M681.0 633.0C690.9 633.4 697.6 626.8 700.0 614.0C687.2 616.4 680.6 623.1 681.0 633.0z" fill="#b4f0a6"/>
<path d="M681.0 633.0L696.2 617.8" stroke="#ff2d8a" stroke-width="0.8"/>
<path d="M633.0 667.0C646.3 673.1 664.5 672.4 685.0 665.0C663.9 659.2 645.7 659.9 633.0 667.0z" fill="#b4f0a6"/>
<path d="M633.0 667.0L674.6 665.4" stroke="#ff2d8a" stroke-width="0.8"/>
<path d="M652.0 650.0C661.1 656.2 674.0 656.6 689.0 651.0C674.4 644.6 661.4 644.3 652.0 650.0z" fill="#b4f0a6"/>
<path d="M652.0 650.0L681.6 650.8" stroke="#ff2d8a" stroke-width="0.8"/>
<path d="M673.0 642.0C679.8 648.0 689.2 648.0 700.0 642.0C689.2 636.0 679.8 636.0 673.0 642.0z" fill="#b4f0a6"/>
<path d="M673.0 642.0L694.6 642.0" stroke="#ff2d8a" stroke-width="0.8"/>
<path d="M690.0 632.0C692.1 636.2 695.6 636.6 700.0 633.0C696.4 628.6 692.9 628.3 690.0 632.0z" fill="#b4f0a6"/>
<path d="M625 673Q650 650 675 637L700 622" fill="none" stroke="#b4f0a6" stroke-width="2" stroke-linecap="round"/>
<path d="M666.0 688.0C672.9 690.1 681.0 687.6 689.0 681.0C678.6 680.0 670.6 682.4 666.0 688.0z" fill="none" stroke="#ff9b4f" stroke-width="1.6"/>
<path d="M646.0 717.0C648.3 705.2 642.3 693.3 629.0 683.0C629.3 699.9 635.2 711.8 646.0 717.0z" fill="#00bfff"/>
<path d="M646.0 717.0L632.4 689.8" stroke="#ff2d8a" stroke-width="0.8"/>
<path d="M648.0 717.0C653.6 711.0 653.9 702.2 649.0 692.0C643.3 701.8 642.9 710.5 648.0 717.0z" fill="#00bfff"/>
<path d="M648.0 717.0L648.8 697.0" stroke="#ff2d8a" stroke-width="0.8"/>
<path d="M637.0 717.0C636.0 712.3 632.5 710.9 627.0 713.0C629.5 718.3 633.0 719.7 637.0 717.0z" fill="#00bfff"/>
<path d="M666.0 717.0C668.4 712.2 666.3 709.0 660.0 708.0C658.5 714.2 660.6 717.3 666.0 717.0z" fill="#00bfff"/>
<path d="M686.0 717.0C686.6 707.3 680.3 699.6 668.0 695.0C670.1 708.0 676.4 715.7 686.0 717.0z" fill="#b4f0a6"/>
<path d="M686.0 717.0L671.6 699.4" stroke="#ff2d8a" stroke-width="0.8"/>
<path d="M690.0 717.0C698.4 715.3 701.9 708.7 700.0 698.0C690.1 702.5 686.6 709.2 690.0 717.0z" fill="#00bfff"/>
<path d="M690.0 717.0L698.0 701.8" stroke="#ff2d8a" stroke-width="0.8"/>
<!-- /workdir/fl/17_left4.txt -->
<path d="M642.0 732.0C632.9 732.5 627.3 739.1 626.0 751.0C637.5 747.7 643.1 741.0 642.0 732.0z" fill="#b4f0a6"/>
<path d="M642.0 732.0L629.2 747.2" stroke="#ff2d8a" stroke-width="0.8"/>
<path d="M660.0 733.0C651.5 733.2 646.9 739.2 647.0 750.0C657.5 747.2 662.0 741.3 660.0 733.0z" fill="#b4f0a6"/>
<path d="M660.0 733.0L649.6 746.6" stroke="#ff2d8a" stroke-width="0.8"/>
<path d="M691.0 729.0C688.2 723.7 682.9 722.6 676.0 726.0C681.1 731.8 686.3 732.8 691.0 729.0z" fill="#b4f0a6"/>
<path d="M691.0 729.0L679.0 726.6" stroke="#ff2d8a" stroke-width="0.8"/>
<path d="M681.0 759.0C676.8 754.3 670.8 754.3 664.0 759.0C670.8 763.7 676.8 763.7 681.0 759.0z" fill="#b4f0a6"/>
<path d="M681.0 759.0L667.4 759.0" stroke="#ff2d8a" stroke-width="0.8"/>
<path d="M683.0 762.0C677.0 768.0 677.0 776.4 683.0 786.0C689.0 776.4 689.0 768.0 683.0 762.0z" fill="#b4f0a6"/>
<path d="M683.0 762.0L683.0 781.2" stroke="#ff2d8a" stroke-width="0.8"/>
<path d="M655.0 795.0C648.6 788.8 641.6 790.2 635.0 799.0C644.4 804.6 651.4 803.2 655.0 795.0z" fill="#b4f0a6"/>
<path d="M655.0 795.0L639.0 798.2" stroke="#ff2d8a" stroke-width="0.8"/>
<path d="M657.0 797.0C654.8 805.5 659.3 812.2 670.0 816.0C670.3 804.6 665.7 798.0 657.0 797.0z" fill="#b4f0a6"/>
<path d="M657.0 797.0L667.4 812.2" stroke="#ff2d8a" stroke-width="0.8"/>
<path d="M650.0 813.0C641.0 810.1 634.0 814.7 630.0 826.0C642.0 826.9 649.0 822.4 650.0 813.0z" fill="#b4f0a6"/>
<path d="M650.0 813.0L634.0 823.4" stroke="#ff2d8a" stroke-width="0.8"/>
<path d="M652.0 815.0C649.1 823.8 653.3 831.9 664.0 838.0C665.1 825.7 660.9 817.7 652.0 815.0z" fill="#b4f0a6"/>
<path d="M652.0 815.0L661.6 833.4" stroke="#ff2d8a" stroke-width="0.8"/>
<path d="M647.0 846.0C652.8 839.2 651.8 830.8 644.0 822.0C638.6 832.4 639.7 840.8 647.0 846.0z" fill="#b4f0a6"/>
<path d="M647.0 846.0L644.6 826.8" stroke="#ff2d8a" stroke-width="0.8"/>
<path d="M625.0 726.0C630.9 726.7 633.0 723.6 631.0 717.0C624.2 717.6 622.1 720.8 625.0 726.0z" fill="#b4f0a6"/>
<path d="M676.0 734.0C678.5 725.8 674.3 719.5 664.0 716.0C663.3 726.9 667.5 733.2 676.0 734.0z" fill="#00bfff"/>
<path d="M676.0 734.0L666.4 719.6" stroke="#ff2d8a" stroke-width="0.8"/>
<path d="M681.0 739.0C674.2 736.1 667.5 738.9 662.0 747.0C671.7 748.7 678.3 745.9 681.0 739.0z" fill="#00bfff"/>
<path d="M681.0 739.0L665.8 745.4" stroke="#ff2d8a" stroke-width="0.8"/>
<path d="M667.0 776.0C660.7 770.8 653.0 771.9 645.0 779.0C654.6 783.7 662.3 782.7 667.0 776.0z" fill="#00bfff"/>
<path d="M667.0 776.0L649.4 778.4" stroke="#ff2d8a" stroke-width="0.8"/>
<path d="M668.0 777.0C664.7 786.8 669.3 795.9 681.0 803.0C682.3 789.3 677.8 780.2 668.0 777.0z" fill="#00bfff"/>
<path d="M668.0 777.0L678.4 797.8" stroke="#ff2d8a" stroke-width="0.8"/>
<path d="M692.0 775.0C687.1 782.1 689.2 789.4 698.0 796.0C702.0 785.8 699.9 778.4 692.0 775.0z" fill="#00bfff"/>
<path d="M692.0 775.0L696.8 791.8" stroke="#ff2d8a" stroke-width="0.8"/>
<path d="M640.0 717.0C637.3 713.3 634.2 713.6 631.0 718.0C635.0 721.6 638.2 721.2 640.0 717.0z" fill="#00bfff"/>
<path d="M625 730Q660 728 700 742" fill="none" stroke="#ff2d8a" stroke-width="1.5" stroke-linecap="round"/>
<path d="M650 717Q680 735 700 743" fill="none" stroke="#ff2d8a" stroke-width="1.3" stroke-linecap="round"/>
<path d="M700 745Q660 756 638 764L632 776" fill="none" stroke="#ff2d8a" stroke-width="1.3" stroke-linecap="round"/>
<path d="M700 752Q668 775 655 800Q650 815 646 842" fill="none" stroke="#ff2d8a" stroke-width="1.5" stroke-linecap="round"/>
<path d="M700 755Q692 775 693 784" fill="none" stroke="#ff2d8a" stroke-width="1.3" stroke-linecap="round"/>
<path d="M688 717L700 737" fill="none" stroke="#ff2d8a" stroke-width="1.2" stroke-linecap="round"/>
<path d="M657.0 757.0C654.2 753.0 649.3 751.9 643.0 754.0C647.9 758.5 652.8 759.5 657.0 757.0z" fill="none" stroke="#ff2d8a" stroke-width="1"/>
<path d="M640.0 764.0C638.0 761.1 634.9 760.8 631.0 763.0C634.3 766.0 637.5 766.4 640.0 764.0z" fill="#ff2d8a"/>
<path d="M644.0 763.0C640.0 765.2 639.0 769.4 641.0 775.0C645.4 771.0 646.5 766.8 644.0 763.0z" fill="none" stroke="#ff2d8a" stroke-width="1"/>
<path d="M656.0 760.0C653.6 762.1 654.0 764.6 657.0 767.0C659.2 763.8 658.9 761.4 656.0 760.0z" fill="#ff2d8a"/>
<path d="M627.0 778.0C623.6 783.6 625.7 788.5 633.0 792.0C635.5 784.3 633.4 779.4 627.0 778.0z" fill="#ff2d8a"/>
<path d="M625.0 785.0C619.8 791.5 620.9 799.6 628.0 808.0C632.7 798.0 631.7 790.0 625.0 785.0z" fill="#ffd42a"/>
<path d="M690.0 817.0C693.9 819.1 697.7 817.7 701.0 813.0C695.5 811.5 691.6 812.9 690.0 817.0z" fill="none" stroke="#ff9b4f" stroke-width="1.6"/>
<path d="M670.0 847.0C677.5 844.9 680.3 838.6 678.0 829.0C669.3 833.8 666.5 840.1 670.0 847.0z" fill="#ffd42a"/>
<path d="M690.0 847.0C698.3 845.7 701.8 839.4 700.0 829.0C690.2 833.0 686.7 839.3 690.0 847.0z" fill="#ffd42a"/>
<path d="M690.0 847.0L698.0 832.6" stroke="#00bfff" stroke-width="0.8"/>
<!-- /workdir/fl/18_left5.txt -->
<path d="M643.0 855.0C650.2 853.4 652.7 847.8 650.0 839.0C641.7 843.0 639.3 848.6 643.0 855.0z" fill="#b4f0a6"/>
<path d="M626.0 877.0C633.1 877.8 640.5 873.9 647.0 866.0C636.7 866.9 629.4 870.7 626.0 877.0z" fill="none" stroke="#ff9b4f" stroke-width="1.6"/>
<path d="M661.0 872.0C671.9 866.5 676.8 854.6 675.0 838.0C662.0 848.6 657.1 860.5 661.0 872.0z" fill="#ffd42a"/>
<path d="M661.0 872.0L672.2 844.8" stroke="#00bfff" stroke-width="0.8"/>
<path d="M681.0 860.0C690.9 858.8 696.5 851.1 697.0 838.0C684.7 842.5 679.1 850.2 681.0 860.0z" fill="#ffd42a"/>
<path d="M681.0 860.0L693.8 842.4" stroke="#00bfff" stroke-width="0.8"/>
<path d="M664.0 873.0C671.6 881.9 684.2 884.4 700.0 880.0C687.0 870.0 674.4 867.6 664.0 873.0z" fill="#ffd42a"/>
<path d="M664.0 873.0L692.8 878.6" stroke="#00bfff" stroke-width="0.8"/>
<path d="M686.0 862.0C689.5 868.0 694.4 868.0 700.0 862.0C694.4 856.0 689.5 856.0 686.0 862.0z" fill="#ffd42a"/>
<path d="M686.0 862.0L697.2 862.0" stroke="#00bfff" stroke-width="0.8"/>
<path d="M642 887Q660 873 685 858L700 850" fill="none" stroke="#ffd42a" stroke-width="1.6" stroke-linecap="round"/>
<path d="M694.0 902.0C687.7 892.7 675.8 888.5 660.0 890.0C671.4 901.1 683.3 905.3 694.0 902.0z" fill="#ff9b4f"/>
<path d="M694.0 902.0L666.8 892.4" stroke="#0000cc" stroke-width="0.8"/>
<path d="M682.0 909.0C674.0 901.4 661.8 900.0 647.0 905.0C660.2 913.2 672.5 914.6 682.0 909.0z" fill="#ff9b4f"/>
<path d="M682.0 909.0L654.0 905.8" stroke="#0000cc" stroke-width="0.8"/>
<path d="M669.0 918.0C661.2 910.2 648.9 908.4 634.0 913.0C647.1 921.6 659.3 923.3 669.0 918.0z" fill="#ff9b4f"/>
<path d="M669.0 918.0L641.0 914.0" stroke="#0000cc" stroke-width="0.8"/>
<path d="M668.0 920.0C654.8 916.0 640.8 921.6 628.0 936.0C647.2 937.6 661.2 932.0 668.0 920.0z" fill="#ff9b4f"/>
<path d="M668.0 920.0L636.0 932.8" stroke="#0000cc" stroke-width="0.8"/>
<path d="M669.0 920.0C658.7 926.3 653.8 938.9 655.0 956.0C667.4 944.3 672.3 931.7 669.0 920.0z" fill="#ff9b4f"/>
<path d="M669.0 920.0L657.8 948.8" stroke="#0000cc" stroke-width="0.8"/>
<path d="M683.0 910.0C673.0 917.0 668.8 929.9 671.0 947.0C682.8 934.5 687.0 921.5 683.0 910.0z" fill="#ff9b4f"/>
<path d="M683.0 910.0L673.4 939.6" stroke="#0000cc" stroke-width="0.8"/>
<path d="M694.0 903.0C687.4 911.2 687.4 922.8 694.0 936.0C700.6 922.8 700.6 911.2 694.0 903.0z" fill="#ff9b4f"/>
<path d="M694.0 903.0L694.0 929.4" stroke="#0000cc" stroke-width="0.8"/>
<path d="M643 932Q669 918 683 910L700 898" fill="none" stroke="#0000cc" stroke-width="1.2" stroke-linecap="round"/>
<path d="M700.0 963.0C702.8 956.6 700.0 951.0 692.0 947.0C690.4 955.8 693.2 961.4 700.0 963.0z" fill="#e85cd8"/>
<path d="M700.0 969.0C697.1 960.4 688.7 954.5 676.0 952.0C682.5 963.1 690.9 969.1 700.0 969.0z" fill="#00bfff" fill-opacity="0.5" stroke="#00bfff" stroke-width="1"/>
</g>
<g clip-path="url(#nv)">
<!-- /workdir/fl/19_navy.txt -->
<path d="M813.0 415.0C820.5 410.1 823.0 401.0 820.0 389.0C811.4 397.8 809.0 406.9 813.0 415.0z" fill="#f9a6f7"/>
<path d="M813.0 415.0L818.6 394.2" stroke="#ff2d8a" stroke-width="0.8"/>
<path d="M811.0 425.0C810.4 414.7 803.1 405.6 790.0 399.0C793.7 413.2 801.1 422.3 811.0 425.0z" fill="#f9a6f7"/>
<path d="M811.0 425.0L794.2 404.2" stroke="#ff2d8a" stroke-width="0.8"/>
<path d="M813.0 423.0C822.1 423.0 829.5 416.7 834.0 405.0C821.7 407.7 814.4 414.0 813.0 423.0z" fill="#f9a6f7"/>
<path d="M813.0 423.0L829.8 408.6" stroke="#ff2d8a" stroke-width="0.8"/>
<path d="M811.0 443.0C809.3 432.6 800.9 423.9 787.0 418.0C792.3 432.1 800.7 440.9 811.0 443.0z" fill="#f9a6f7"/>
<path d="M811.0 443.0L791.8 423.0" stroke="#ff2d8a" stroke-width="0.8"/>
<path d="M813.0 442.0C822.6 441.1 830.3 433.7 835.0 421.0C822.1 425.1 814.4 432.4 813.0 442.0z" fill="#f9a6f7"/>
<path d="M813.0 442.0L830.6 425.2" stroke="#ff2d8a" stroke-width="0.8"/>
<path d="M811.0 461.0C807.0 451.2 796.9 444.6 782.0 442.0C790.3 454.6 800.5 461.3 811.0 461.0z" fill="#f9a6f7"/>
<path d="M811.0 461.0L787.8 445.8" stroke="#ff2d8a" stroke-width="0.8"/>
<path d="M812.0 460.0C822.5 459.9 832.3 452.9 840.0 440.0C825.3 443.1 815.5 450.1 812.0 460.0z" fill="#f9a6f7"/>
<path d="M812.0 460.0L834.4 444.0" stroke="#ff2d8a" stroke-width="0.8"/>
<path d="M805 481Q811 465 812 430L814 402" fill="none" stroke="#ff2d8a" stroke-width="1.2" stroke-linecap="round"/>
<path d="M785 525Q808 520 840 506" fill="none" stroke="#b4f0a6" stroke-width="1.3" stroke-linecap="round"/>
<path d="M799.0 521.0C805.7 518.8 811.6 512.5 816.0 503.0C806.8 507.9 800.8 514.2 799.0 521.0z" fill="none" stroke="#b4f0a6" stroke-width="1"/>
<path d="M800.0 520.0C805.6 524.0 814.0 525.1 824.0 523.0C814.8 518.5 806.4 517.5 800.0 520.0z" fill="none" stroke="#b4f0a6" stroke-width="1"/>
<path d="M799.0 522.0C797.6 524.5 798.3 527.3 801.0 530.0C802.1 526.3 801.4 523.5 799.0 522.0z" fill="none" stroke="#b4f0a6" stroke-width="1"/>
<path d="M840 506L822 489 M840 506L834 482 M840 506L850 480 M840 506L844 493 M840 506L864 492 M840 506L829 502 M840 506L864 508 M840 506L834 522 M840 506L846 517 M840 506L865 523 M840 506L851 531" fill="none" stroke="#b4f0a6" stroke-width="1" stroke-linecap="round"/>
<circle cx="822.0" cy="489.0" r="5.5" fill="#ff2d8a"/>
<circle cx="834.0" cy="482.0" r="5.5" fill="#ff2d8a"/>
<circle cx="850.0" cy="480.0" r="6.0" fill="#ff2d8a"/>
<circle cx="844.0" cy="493.0" r="4.0" fill="#ff2d8a"/>
<circle cx="864.0" cy="492.0" r="6.5" fill="#ff2d8a"/>
<circle cx="829.0" cy="502.0" r="4.0" fill="#ff2d8a"/>
<circle cx="864.0" cy="508.0" r="5.0" fill="#ff2d8a"/>
<circle cx="834.0" cy="522.0" r="5.5" fill="#ff2d8a"/>
<circle cx="846.0" cy="517.0" r="4.5" fill="#ff2d8a"/>
<circle cx="865.0" cy="523.0" r="5.0" fill="#ff2d8a"/>
<circle cx="851.0" cy="531.0" r="6.0" fill="#ff2d8a"/>
<path d="M905.0 432.0C899.5 422.3 888.0 416.7 872.0 416.0C882.4 428.1 894.0 433.7 905.0 432.0z" fill="#00bfff"/>
<path d="M901.7 430.4C897.1 424.1 888.5 419.9 877.0 418.4C885.3 426.5 893.9 430.7 901.7 430.4z" fill="#0000cc"/>
<path d="M901.7 430.4L879.5 419.6" fill="none" stroke="#00bfff" stroke-width="0.9" stroke-linecap="round"/>
<path d="M915.0 435.0C909.2 422.9 895.9 413.1 877.0 407.0C888.5 423.3 901.8 433.1 915.0 435.0z" fill="#00bfff"/>
<path d="M911.2 432.2C906.2 424.0 896.3 416.7 882.7 411.2C891.9 422.5 901.9 429.9 911.2 432.2z" fill="#0000cc"/>
<path d="M911.2 432.2L885.6 413.3" fill="none" stroke="#00bfff" stroke-width="0.9" stroke-linecap="round"/>
<path d="M928.0 440.0C925.9 426.1 915.8 411.8 899.0 399.0C905.4 419.0 915.6 433.4 928.0 440.0z" fill="#00bfff"/>
<path d="M925.1 435.9C922.7 426.1 915.1 415.3 903.4 405.1C909.1 419.5 916.7 430.3 925.1 435.9z" fill="#0000cc"/>
<path d="M925.1 435.9L905.6 408.2" fill="none" stroke="#00bfff" stroke-width="0.9" stroke-linecap="round"/>
<path d="M940.0 447.0C939.2 432.9 930.5 417.5 915.0 403.0C919.5 423.7 928.3 439.1 940.0 447.0z" fill="#00bfff"/>
<path d="M937.5 442.6C936.0 432.5 929.5 421.0 918.8 409.6C923.1 424.6 929.6 436.2 937.5 442.6z" fill="#0000cc"/>
<path d="M937.5 442.6L920.7 412.9" fill="none" stroke="#00bfff" stroke-width="0.9" stroke-linecap="round"/>
<path d="M950.0 452.0C950.2 437.8 942.5 421.7 928.0 406.0C931.1 427.1 938.8 443.2 950.0 452.0z" fill="#00bfff"/>
<path d="M947.8 447.4C947.0 437.2 941.2 425.1 931.3 412.9C934.6 428.3 940.4 440.4 947.8 447.4z" fill="#0000cc"/>
<path d="M947.8 447.4L932.9 416.3" fill="none" stroke="#00bfff" stroke-width="0.9" stroke-linecap="round"/>
<path d="M960.0 458.0C960.8 443.6 953.8 426.8 940.0 410.0C942.2 431.6 949.2 448.4 960.0 458.0z" fill="#00bfff"/>
<path d="M958.0 453.2C957.6 442.8 952.4 430.2 943.0 417.2C945.6 433.0 950.9 445.6 958.0 453.2z" fill="#0000cc"/>
<path d="M958.0 453.2L944.5 420.8" fill="none" stroke="#00bfff" stroke-width="0.9" stroke-linecap="round"/>
<path d="M972.0 465.0C973.7 450.9 967.8 434.1 955.0 417.0C955.8 438.3 961.8 455.1 972.0 465.0z" fill="#00bfff"/>
<path d="M970.3 460.2C970.5 450.0 966.1 437.4 957.5 424.2C959.2 439.8 963.7 452.4 970.3 460.2z" fill="#0000cc"/>
<path d="M970.3 460.2L958.8 427.8" fill="none" stroke="#00bfff" stroke-width="0.9" stroke-linecap="round"/>
<path d="M985.0 472.0C987.3 457.9 982.0 440.8 970.0 423.0C970.0 444.4 975.2 461.6 985.0 472.0z" fill="#00bfff"/>
<path d="M983.5 467.1C984.2 456.8 980.2 444.0 972.2 430.4C973.2 446.2 977.2 459.0 983.5 467.1z" fill="#0000cc"/>
<path d="M983.5 467.1L973.3 434.1" fill="none" stroke="#00bfff" stroke-width="0.9" stroke-linecap="round"/>
<path d="M1000.0 480.0C1005.0 466.2 1003.3 447.6 995.0 427.0C990.7 448.8 992.5 467.3 1000.0 480.0z" fill="#00bfff"/>
<path d="M999.5 474.7C1002.2 464.4 1000.9 450.5 995.8 434.9C993.6 451.2 994.9 465.1 999.5 474.7z" fill="#0000cc"/>
<path d="M999.5 474.7L996.2 438.9" fill="none" stroke="#00bfff" stroke-width="0.9" stroke-linecap="round"/>
<path d="M1015.0 486.0C1020.5 478.6 1019.5 469.1 1012.0 459.0C1006.9 470.5 1008.0 479.9 1015.0 486.0z" fill="#00bfff"/>
<path d="M1014.7 483.3C1017.8 477.9 1017.0 470.8 1012.5 463.1C1009.7 471.6 1010.5 478.6 1014.7 483.3z" fill="#0000cc"/>
<path d="M1014.7 483.3L1012.7 465.1" fill="none" stroke="#00bfff" stroke-width="0.9" stroke-linecap="round"/>
<path d="M920.0 440.0C907.0 437.8 891.6 443.0 876.0 455.0C895.6 455.0 911.0 449.7 920.0 440.0z" fill="#00bfff"/>
<path d="M915.6 441.5C906.2 440.9 894.6 444.8 882.6 452.8C897.0 451.7 908.5 447.8 915.6 441.5z" fill="#0000cc"/>
<path d="M915.6 441.5L885.9 451.7" fill="none" stroke="#00bfff" stroke-width="0.9" stroke-linecap="round"/>
<path d="M935.0 448.0C921.5 448.2 906.8 456.3 893.0 471.0C912.8 467.3 927.5 459.3 935.0 448.0z" fill="#00bfff"/>
<path d="M930.8 450.3C921.2 451.4 910.1 457.5 899.3 467.6C913.7 463.9 924.7 457.8 930.8 450.3z" fill="#0000cc"/>
<path d="M930.8 450.3L902.4 465.9" fill="none" stroke="#00bfff" stroke-width="0.9" stroke-linecap="round"/>
<path d="M950.0 455.0C935.5 456.3 919.7 465.8 905.0 482.0C926.3 476.6 942.0 467.2 950.0 455.0z" fill="#00bfff"/>
<path d="M945.5 457.7C935.2 459.6 923.4 466.7 911.8 477.9C927.2 473.0 939.0 465.9 945.5 457.7z" fill="#0000cc"/>
<path d="M945.5 457.7L915.2 475.9" fill="none" stroke="#00bfff" stroke-width="0.9" stroke-linecap="round"/>
<path d="M965.0 463.0C950.4 464.6 934.7 474.4 920.0 491.0C941.3 485.2 957.1 475.4 965.0 463.0z" fill="#00bfff"/>
<path d="M960.5 465.8C950.1 467.9 938.3 475.3 926.8 486.8C942.2 481.5 954.0 474.2 960.5 465.8z" fill="#0000cc"/>
<path d="M960.5 465.8L930.2 484.7" fill="none" stroke="#00bfff" stroke-width="0.9" stroke-linecap="round"/>
<path d="M980.0 470.0C965.4 472.3 950.0 482.8 936.0 500.0C957.2 493.2 972.6 482.7 980.0 470.0z" fill="#00bfff"/>
<path d="M975.6 473.0C965.3 475.6 953.7 483.5 942.6 495.5C957.9 489.5 969.4 481.6 975.6 473.0z" fill="#0000cc"/>
<path d="M975.6 473.0L945.9 493.2" fill="none" stroke="#00bfff" stroke-width="0.9" stroke-linecap="round"/>
<path d="M995.0 478.0C981.1 481.1 967.1 492.3 955.0 510.0C974.9 502.1 988.9 490.9 995.0 478.0z" fill="#00bfff"/>
<path d="M991.0 481.2C981.2 484.3 970.7 492.7 961.0 505.2C975.3 498.5 985.8 490.1 991.0 481.2z" fill="#0000cc"/>
<path d="M991.0 481.2L964.0 502.8" fill="none" stroke="#00bfff" stroke-width="0.9" stroke-linecap="round"/>
<path d="M1008.0 485.0C992.6 490.0 976.9 503.6 963.0 524.0C985.1 513.2 1000.9 499.5 1008.0 485.0z" fill="#00bfff"/>
<path d="M1003.5 488.9C992.7 493.4 980.9 503.7 969.8 518.1C985.7 509.2 997.5 499.0 1003.5 488.9z" fill="#0000cc"/>
<path d="M1003.5 488.9L973.2 515.2" fill="none" stroke="#00bfff" stroke-width="0.9" stroke-linecap="round"/>
<path d="M1024 490Q970 465 935 445Q900 428 866 425" fill="none" stroke="#00bfff" stroke-width="1.6" stroke-linecap="round"/>
<path d="M1040.0 443.0C1045.4 435.2 1046.4 423.6 1043.0 410.0C1037.2 422.8 1036.1 434.3 1040.0 443.0z" fill="#b4f0a6"/>
<path d="M1040.0 443.0L1042.4 416.6" stroke="#ff9b4f" stroke-width="0.8"/>
<path d="M1053.0 434.0C1061.0 427.3 1065.2 415.4 1065.0 400.0C1055.2 411.8 1051.0 423.7 1053.0 434.0z" fill="#b4f0a6"/>
<path d="M1053.0 434.0L1062.6 406.8" stroke="#ff9b4f" stroke-width="0.8"/>
<path d="M1068.0 424.0C1077.0 418.1 1081.9 406.5 1082.0 391.0C1070.9 401.9 1066.0 413.4 1068.0 424.0z" fill="#b4f0a6"/>
<path d="M1068.0 424.0L1079.2 397.6" stroke="#ff9b4f" stroke-width="0.8"/>
<path d="M1074.0 420.0C1084.0 424.5 1095.9 421.7 1108.0 412.0C1092.9 408.7 1081.0 411.5 1074.0 420.0z" fill="#b4f0a6"/>
<path d="M1074.0 420.0L1101.2 413.6" stroke="#ff9b4f" stroke-width="0.8"/>
<path d="M1066.0 427.0C1073.7 434.4 1086.0 436.5 1101.0 433.0C1088.0 424.7 1075.8 422.6 1066.0 427.0z" fill="#b4f0a6"/>
<path d="M1066.0 427.0L1094.0 431.8" stroke="#ff9b4f" stroke-width="0.8"/>
<path d="M1053.0 435.0C1060.9 442.6 1073.5 445.1 1089.0 442.0C1075.7 433.3 1063.1 430.9 1053.0 435.0z" fill="#b4f0a6"/>
<path d="M1053.0 435.0L1081.8 440.6" stroke="#ff9b4f" stroke-width="0.8"/>
<path d="M1042.0 443.0C1048.4 451.8 1060.3 456.4 1076.0 456.0C1064.5 445.2 1052.6 440.7 1042.0 443.0z" fill="#b4f0a6"/>
<path d="M1042.0 443.0L1069.2 453.4" stroke="#ff9b4f" stroke-width="0.8"/>
<path d="M1021 450Q1040 443 1065 426L1090 412" fill="none" stroke="#ff9b4f" stroke-width="1" stroke-linecap="round"/>
<path d="M1055.0 518.0C1063.8 512.6 1072.6 502.1 1080.0 488.0C1067.4 497.9 1058.7 508.4 1055.0 518.0z" fill="#e85cd8"/>
<path d="M1055.0 518.0C1066.6 514.0 1080.3 504.5 1094.0 491.0C1076.5 499.1 1062.9 508.5 1055.0 518.0z" fill="#ff9b4f"/>
<path d="M1055.0 518.0C1067.3 518.2 1083.4 514.0 1101.0 506.0C1081.8 507.6 1065.7 511.8 1055.0 518.0z" fill="#ff9b4f"/>
<path d="M1055.0 518.0C1067.0 520.6 1083.4 519.5 1102.0 515.0C1083.0 512.9 1066.5 513.9 1055.0 518.0z" fill="#e85cd8"/>
<path d="M1055.0 518.0C1064.2 523.0 1077.8 525.5 1094.0 525.0C1079.0 518.9 1065.3 516.5 1055.0 518.0z" fill="#ff9b4f"/>
<path d="M1055.0 518.0C1059.8 525.9 1069.6 532.2 1083.0 536.0C1074.0 525.4 1064.2 519.1 1055.0 518.0z" fill="#e85cd8"/>
<path d="M1050.0 518.0C1057.7 516.4 1061.2 510.1 1060.0 500.0C1050.8 504.3 1047.3 510.6 1050.0 518.0z" fill="none" stroke="#b4f0a6" stroke-width="1.3"/>
<path d="M1050.0 520.0C1049.0 527.5 1053.6 532.0 1063.0 533.0C1062.0 523.6 1057.5 519.0 1050.0 520.0z" fill="none" stroke="#b4f0a6" stroke-width="1.3"/>
<path d="M1024 516Q1035 518 1048 518" fill="none" stroke="#b4f0a6" stroke-width="1.3" stroke-linecap="round"/>
</g>
</svg><!--/FLORAL-->
<!--DECOR-->

<div class="a" style="left:765px;top:279px;width:13px;height:13px;background:#fff;border:1px solid #9a9a9a"></div>
<svg class="a" style="left:765px;top:279px" width="13" height="13" viewBox="0 0 13 13"><path d="M6.5 2.5v8 M2.5 6.5h8 M5 4l1.5-1.5 1.5 1.5 M5 9l1.5 1.5 1.5-1.5 M4 5l-1.5 1.5 1.5 1.5 M9 5l1.5 1.5-1.5 1.5" stroke="#444" fill="none" stroke-width="1"/></svg>
<div class="t" style="left:787px;top:305.5px;font-size:45.7px;font-weight:bold;color:#ffd12b;letter-spacing:2.75px;transform:scaleY(1.04);transform-origin:0 40px">EVENT NAME</div>
<div class="a" style="left:778px;top:361px;width:346px;height:2px;background:#b4f0a6"></div>
<div class="a" style="left:778px;top:379px;width:346px;height:2px;background:#b4f0a6"></div>
<div class="a" style="left:927px;top:557px;width:48px;height:27px;background:#0b0b45"></div>
<div class="t" style="left:926px;top:562.5px;font-size:22.6px;font-weight:bold;color:#d4d4d4;letter-spacing:1.3px;transform:scaleY(1.04);transform-origin:0 20px">DAY</div>
<div class="t" style="left:909px;top:588.5px;font-size:22.6px;color:#fff;transform:scaleY(1.04);transform-origin:0 20px">MONTH</div>
<div class="a" style="left:778px;top:620px;width:346px;height:1px;background:#e79ff0"></div>
<div class="t" style="left:924.5px;top:633.5px;font-size:22.6px;font-weight:bold;color:#fff;transform:scaleY(1.04);transform-origin:0 20px">TIME</div>
<div class="t" style="left:913.5px;top:660px;letter-spacing:0.3px;font-size:22.6px;color:#fff;transform:scaleY(1.04);transform-origin:0 20px">AM/PM</div>
<div class="a" style="left:778px;top:688px;width:346px;height:1px;background:#e79ff0"></div>
<div class="t" style="left:911.5px;top:701.5px;font-size:22.6px;font-weight:bold;color:#fff;transform:scaleY(1.04);transform-origin:0 20px">PLACE</div>
<div class="t" style="left:896px;top:727.5px;font-size:22.6px;color:#fff;transform:scaleY(1.04);transform-origin:0 20px">ADDRESS</div>
<div class="a" style="left:778px;top:771px;width:346px;height:2px;background:#fff"></div>
<svg class="a" style="left:700px;top:500px" width="502" height="320" viewBox="700 500 502 320">
 <g fill="#00b8f4"><circle cx="917" cy="572" r="3"/><circle cx="985" cy="572" r="3"/>
 <circle cx="914" cy="643" r="3"/><circle cx="988" cy="643" r="3"/>
 <circle cx="902" cy="711" r="3"/><circle cx="999" cy="711" r="3"/></g>
</svg>
<div class="t" style="left:812.5px;top:785.5px;font-size:22.5px;font-weight:bold;color:#b4f0a6;transform:scaleY(1.03);transform-origin:0 20px">FREE DRINKS <span style="color:#f5a3f5">•</span> DJ NAME</div>
<div class="a" style="left:778px;top:819px;width:360px;font-size:12.8px;line-height:14.9px;color:#fff">Lorem ipsum dolor sit amet, consectetur adipiscing elit, sed<br>do eiusmod tempor incididunt ut labore et dolore magna<br>aliqua. Ut enim ad minim veniam, quis nostrud exercitation<br>ullamco laboris nisi ut aliquip ex ea commodo consequat.</div>
<div class="a" style="left:1124px;top:878px;width:8px;height:8px;background:#fff;border:1px solid #999"></div>

<!--DROPDOWN-->
<div class="a" style="left:564px;top:129px;width:174px;height:205px;background:#fff;border:1px solid #c6c6c6;box-shadow:1px 1px 2px rgba(0,0,0,.12)"></div>
<div class="a" style="left:566px;top:131px;width:170px;height:23px;background:#e9e9e9"></div>
<div class="a" style="left:566px;top:242px;width:170px;height:23px;background:#e9e9e9"></div>
<div class="t" style="left:574px;top:137px;font-weight:bold;color:#505050;letter-spacing:-0.3px">Theme Colors</div>
<div class="t" style="left:574px;top:248px;font-weight:bold;color:#505050;letter-spacing:-0.3px">Standard Colors</div>
<svg class="a" style="left:560px;top:150px" width="180" height="190" viewBox="560 150 180 190">
<rect x="568.5" y="156.5" width="12" height="12" fill="#ffffff" stroke="#e2e3e6"/>
<rect x="568.5" y="174.5" width="12" height="64" fill="none" stroke="#e2e3e6"/>
<rect x="569" y="175.0" width="11" height="12.8" fill="#f2f2f2"/>
<rect x="569" y="187.6" width="11" height="12.8" fill="#d9d9d9"/>
<rect x="569" y="200.2" width="11" height="12.8" fill="#bfbfbf"/>
<rect x="569" y="212.8" width="11" height="12.8" fill="#a6a6a6"/>
<rect x="569" y="225.4" width="11" height="12.8" fill="#808080"/>
<rect x="585.5" y="156.5" width="12" height="12" fill="#000000" stroke="#e2e3e6"/>
<rect x="585.5" y="174.5" width="12" height="64" fill="none" stroke="#e2e3e6"/>
<rect x="586" y="175.0" width="11" height="12.8" fill="#7f7f7f"/>
<rect x="586" y="187.6" width="11" height="12.8" fill="#595959"/>
<rect x="586" y="200.2" width="11" height="12.8" fill="#404040"/>
<rect x="586" y="212.8" width="11" height="12.8" fill="#262626"/>
<rect x="586" y="225.4" width="11" height="12.8" fill="#0d0d0d"/>
<rect x="602.5" y="156.5" width="12" height="12" fill="#00bfff" stroke="#e2e3e6"/>
<rect x="602.5" y="174.5" width="12" height="64" fill="none" stroke="#e2e3e6"/>
<rect x="603" y="175.0" width="11" height="12.8" fill="#ccf2ff"/>
<rect x="603" y="187.6" width="11" height="12.8" fill="#99e5ff"/>
<rect x="603" y="200.2" width="11" height="12.8" fill="#66d9ff"/>
<rect x="603" y="212.8" width="11" height="12.8" fill="#008fbf"/>
<rect x="603" y="225.4" width="11" height="12.8" fill="#005f80"/>
<rect x="619.5" y="156.5" width="12" height="12" fill="#000060" stroke="#e2e3e6"/>
<rect x="619.5" y="174.5" width="12" height="64" fill="none" stroke="#e2e3e6"/>
<rect x="620" y="175.0" width="11" height="12.8" fill="#d3d3ff"/>
<rect x="620" y="187.6" width="11" height="12.8" fill="#9999ff"/>
<rect x="620" y="200.2" width="11" height="12.8" fill="#3333ff"/>
<rect x="620" y="212.8" width="11" height="12.8" fill="#0000cc"/>
<rect x="620" y="225.4" width="11" height="12.8" fill="#000088"/>
<rect x="636.5" y="156.5" width="12" height="12" fill="#ff2d8a" stroke="#e2e3e6"/>
<rect x="636.5" y="174.5" width="12" height="64" fill="none" stroke="#e2e3e6"/>
<rect x="637" y="175.0" width="11" height="12.8" fill="#ffd5e8"/>
<rect x="637" y="187.6" width="11" height="12.8" fill="#ffa6cc"/>
<rect x="637" y="200.2" width="11" height="12.8" fill="#ff81b9"/>
<rect x="637" y="212.8" width="11" height="12.8" fill="#e0006a"/>
<rect x="637" y="225.4" width="11" height="12.8" fill="#950046"/>
<rect x="653.5" y="156.5" width="12" height="12" fill="#e85cd8" stroke="#e2e3e6"/>
<rect x="653.5" y="174.5" width="12" height="64" fill="none" stroke="#e2e3e6"/>
<rect x="654" y="175.0" width="11" height="12.8" fill="#fadef7"/>
<rect x="654" y="187.6" width="11" height="12.8" fill="#f6bdef"/>
<rect x="654" y="200.2" width="11" height="12.8" fill="#f19de8"/>
<rect x="654" y="212.8" width="11" height="12.8" fill="#e01fcb"/>
<rect x="654" y="225.4" width="11" height="12.8" fill="#95148a"/>
<rect x="670.5" y="156.5" width="12" height="12" fill="#f9a6f7" stroke="#e2e3e6"/>
<rect x="670.5" y="174.5" width="12" height="64" fill="none" stroke="#e2e3e6"/>
<rect x="671" y="175.0" width="11" height="12.8" fill="#f97ff8"/>
<rect x="671" y="187.6" width="11" height="12.8" fill="#f53ff3"/>
<rect x="671" y="200.2" width="11" height="12.8" fill="#cc00cc"/>
<rect x="671" y="212.8" width="11" height="12.8" fill="#660066"/>
<rect x="671" y="225.4" width="11" height="12.8" fill="#2e002e"/>
<rect x="687.5" y="156.5" width="12" height="12" fill="#b4f0a6" stroke="#e2e3e6"/>
<rect x="687.5" y="174.5" width="12" height="64" fill="none" stroke="#e2e3e6"/>
<rect x="688" y="175.0" width="11" height="12.8" fill="#93e983"/>
<rect x="688" y="187.6" width="11" height="12.8" fill="#6ce153"/>
<rect x="688" y="200.2" width="11" height="12.8" fill="#30bb15"/>
<rect x="688" y="212.8" width="11" height="12.8" fill="#1b5e0d"/>
<rect x="688" y="225.4" width="11" height="12.8" fill="#0a2304"/>
<rect x="704.5" y="156.5" width="12" height="12" fill="#ff9b4f" stroke="#e2e3e6"/>
<rect x="704.5" y="174.5" width="12" height="64" fill="none" stroke="#e2e3e6"/>
<rect x="705" y="175.0" width="11" height="12.8" fill="#ffe7d8"/>
<rect x="705" y="187.6" width="11" height="12.8" fill="#ffd2b3"/>
<rect x="705" y="200.2" width="11" height="12.8" fill="#ffbf94"/>
<rect x="705" y="212.8" width="11" height="12.8" fill="#ff6600"/>
<rect x="705" y="225.4" width="11" height="12.8" fill="#a34200"/>
<rect x="721.5" y="156.5" width="12" height="12" fill="#ffd42a" stroke="#e2e3e6"/>
<rect x="721.5" y="174.5" width="12" height="64" fill="none" stroke="#e2e3e6"/>
<rect x="722" y="175.0" width="11" height="12.8" fill="#fff6d4"/>
<rect x="722" y="187.6" width="11" height="12.8" fill="#ffeeaa"/>
<rect x="722" y="200.2" width="11" height="12.8" fill="#ffe47f"/>
<rect x="722" y="212.8" width="11" height="12.8" fill="#dfb200"/>
<rect x="722" y="225.4" width="11" height="12.8" fill="#957700"/>
<rect x="568.5" y="267.5" width="12" height="12" fill="#c00000" stroke="#e2e3e6"/>
<rect x="585.5" y="267.5" width="12" height="12" fill="#ff0000" stroke="#e2e3e6"/>
<rect x="602.5" y="267.5" width="12" height="12" fill="#ffc000" stroke="#e2e3e6"/>
<rect x="619.5" y="267.5" width="12" height="12" fill="#ffff00" stroke="#e2e3e6"/>
<rect x="636.5" y="267.5" width="12" height="12" fill="#92d050" stroke="#e2e3e6"/>
<rect x="653.5" y="267.5" width="12" height="12" fill="#00b050" stroke="#e2e3e6"/>
<rect x="670.5" y="267.5" width="12" height="12" fill="#00b0f0" stroke="#e2e3e6"/>
<rect x="687.5" y="267.5" width="12" height="12" fill="#0070c0" stroke="#e2e3e6"/>
<rect x="704.5" y="267.5" width="12" height="12" fill="#002060" stroke="#e2e3e6"/>
<rect x="721.5" y="267.5" width="12" height="12" fill="#7030a0" stroke="#e2e3e6"/>
<rect x="568.5" y="284.5" width="19" height="19" fill="#f0f0f0" stroke="#888"/>
<rect x="570" y="286" width="16" height="16" fill="#c6c6c6" stroke="#dedede"/>
<path d="M566 306.5h170" stroke="#e1e1e1"/>
<path d="M577.5 319.5L573.31 313.28A7.5 7.5 0 0 1 581.69 313.28z" fill="#e8a354"/>
<path d="M577.5 319.5L582.12 313.59A7.5 7.5 0 0 1 584.71 321.57z" fill="#e3c48a"/>
<path d="M577.5 319.5L584.55 322.07A7.5 7.5 0 0 1 577.76 327.00z" fill="#78a490"/>
<path d="M577.5 319.5L577.24 327.00A7.5 7.5 0 0 1 570.45 322.07z" fill="#4a86c5"/>
<path d="M577.5 319.5L570.29 321.57A7.5 7.5 0 0 1 572.88 313.59z" fill="#d9704a"/>
<path d="M598 299.5h9 M598 325.5h10" stroke="#444"/>
</svg>
<div class="t" style="left:598px;top:288px;color:#333">No Color</div>
<div class="t" style="left:598px;top:314px;color:#333">More Colors...</div>

<div class="t" style="left:7px;top:1015px;color:#333;letter-spacing:-0.45px">Page 1 of 1</div>
<div class="t" style="left:85px;top:1015px;color:#333;letter-spacing:-0.15px">1 of 48 words</div>
<svg class="a" style="left:0;top:1010px" width="1919" height="22" viewBox="0 1010 1919 22">
 <g fill="none" stroke="#666" stroke-width="1">
  <path d="M173.5 1014.5h6l1 1v11l-1-1h-6z M180.5 1015.5l1-1h5v11h-5l-1 1"/>
  <path d="M183 1022l4-4 1.2 1.2-4 4h-1.2z" fill="#f3f3f3"/>
 </g>
 <rect x="1672" y="1011" width="38" height="21" fill="#c6c6c6"/>
 <g fill="none" stroke="#666" stroke-width="1">
  <path d="M1646.5 1015.5h6l.5.5.5-.5h6v11h-6l-.5.5-.5-.5h-6z M1653 1016v11"/>
  <path d="M1648 1018h3.5 M1648 1020h3.5 M1648 1022h3.5 M1648 1024h3.5 M1654.5 1018h3.5 M1654.5 1020h3.5 M1654.5 1022h3.5 M1654.5 1024h3.5"/>
  <path d="M1684.5 1014.5h13v12h-13z M1686.5 1017.5h9 M1686.5 1019.5h9 M1686.5 1021.5h9 M1686.5 1023.5h9"/>
  <path d="M1722.5 1014.5h10v9 M1722.5 1014.5v11h6 M1724.5 1017.5h6 M1724.5 1019.5h5"/>
  <circle cx="1733" cy="1025" r="3"/>
 </g>
 <path d="M1753 1020.5h7" stroke="#444" stroke-width="2"/>
 <path d="M1763 1021.5h100" stroke="#999" stroke-width="1"/>
 <path d="M1813.5 1018v6" stroke="#999"/>
 <rect x="1800" y="1015" width="5" height="11" fill="#666"/>
 <path d="M1866 1021h8 M1870 1017v8" stroke="#444" stroke-width="2"/>
</svg>
<div class="t" style="left:1885px;top:1015px;color:#333">80%</div>

</body></html>
